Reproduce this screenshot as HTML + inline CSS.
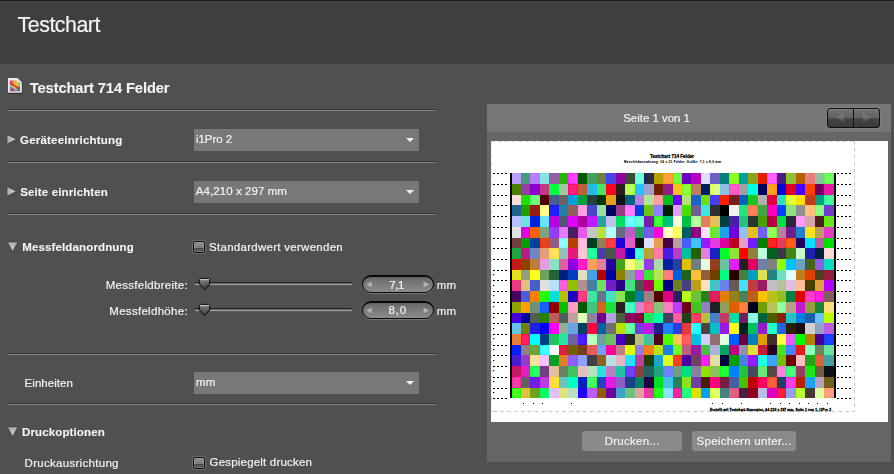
<!DOCTYPE html>
<html lang="de">
<head>
<meta charset="utf-8">
<title>Testchart</title>
<style>
*{box-sizing:border-box;margin:0;padding:0}
html,body{width:894px;height:474px;overflow:hidden;background:#505050}
body{position:relative;font-family:"Liberation Sans",sans-serif;color:#f2f2f2;font-size:13px}
.abs{position:absolute}
#topline{left:0;top:0;width:894px;height:2px;background:#1e1e1e;border-bottom:1px solid #464646}
#hdr{left:0;top:1px;width:894px;height:63px;background:#3f3f3f}
.sep{left:7px;width:429px;height:2px;background:linear-gradient(#363636 0 50%,transparent 50%)}
.sep:after{content:"";position:absolute;left:1px;right:0;top:1px;height:1px;background:#828282}
#tx{position:absolute;left:0;top:0;width:894px;height:474px;will-change:transform}
.t{-webkit-text-stroke:0.2px #f2f2f2}
.b{-webkit-text-stroke:0.1px #f4f4f4}
.t{color:#f2f2f2;line-height:1;white-space:nowrap}
.b{color:#f4f4f4;line-height:1;white-space:nowrap;font-weight:bold}
.sel{left:194px;width:225px;height:22px;background:#787878;color:#f4f4f4;font-size:12.5px;line-height:20px;padding-left:2px;white-space:nowrap}
.sel:after{content:"";position:absolute;right:5.2px;top:9px;border-left:4.4px solid transparent;border-right:4.4px solid transparent;border-top:4.6px solid #f0f0f0}
.tri-r{width:0;height:0;border-top:5px solid transparent;border-bottom:5px solid transparent;border-left:8px solid #b4b4b4}
.tri-d{width:0;height:0;border-left:5px solid transparent;border-right:5px solid transparent;border-top:9px solid #b4b4b4}
.cb{width:12px;height:12px;border:1px solid #0e0e0e;border-radius:2.5px;background:linear-gradient(#8e8e8e 0,#7c7c7c 58%,#4a4a4a 61%,#5e5e5e 100%);box-shadow:0 0 0 1px rgba(150,150,150,.4),inset 0 0 0 1px rgba(190,190,190,.3)}
.track{left:195px;width:156.5px;height:4px;border-radius:1.5px;background:linear-gradient(#1e1e1e 0 25%,#6a6a6a 25% 50%,#989898 50% 75%,#5a5a5a 75% 100%)}
.num{left:362px;width:71.5px;height:18px;border-radius:9px;border:1.5px solid #0a0a0a;border-top-width:2px;border-bottom-width:1.2px;background:linear-gradient(#636363 0,#707070 20%,#8c8c8c 100%);box-shadow:0 1px 0 rgba(150,150,150,.55)}
.num i{position:absolute;top:4.6px;width:0;height:0;border-top:2.8px solid transparent;border-bottom:2.8px solid transparent}
.num i.l{left:3.5px;border-right:5.2px solid #b0b0b0}
.num i.r{right:3px;border-left:5.2px solid #b0b0b0}
#panel{left:487px;top:104px;width:404px;height:357.5px;background:#666}
#phead{left:0;top:0;width:404px;height:28px;background:#767676}
#ptitle{left:0;top:6px;width:340px;text-align:center;font-size:13px;line-height:16px;color:#f4f4f4}
#page{left:4px;top:37px;width:397px;height:281px;background:#fff;overflow:hidden}
.btn{top:327px;height:20px;border-radius:3px;background:#8a8a8a;color:#f4f4f4;font-size:13px;line-height:19px;text-align:center;white-space:nowrap}
</style>
</head>
<body>
<div class="abs" id="hdr"></div>
<div class="abs" id="topline"></div>

<svg class="abs" style="left:7px;top:77px" width="17" height="18" viewBox="0 0 17 18">
<defs>
<linearGradient id="ic1" x1="0" y1="0" x2="1" y2="1"><stop offset="0" stop-color="#d8207c"/><stop offset="0.3" stop-color="#e8a838"/><stop offset="0.5" stop-color="#e8d840"/><stop offset="0.7" stop-color="#8cc844"/><stop offset="1" stop-color="#3a58c8"/></linearGradient>
<linearGradient id="ic2" x1="0" y1="0" x2="0.6" y2="1"><stop offset="0" stop-color="#e02888" stop-opacity="0"/><stop offset="0.35" stop-color="#60c8d8" stop-opacity=".95"/><stop offset="0.7" stop-color="#a040b8" stop-opacity=".95"/><stop offset="1" stop-color="#a030a0"/></linearGradient>
</defs>
<path d="M1.4 1.8h9.2l4.8 4.6v10.5h-14z" fill="#262626" opacity=".8"/>
<path d="M1 1h9.2l4.6 4.6v10.2h-13.8z" fill="#ececec"/>
<path d="M2.8 3.6h7.6v2.2h2.6v8.4h-10.2z" fill="url(#ic1)"/>
<path d="M2.8 6.5l5.6 7.7h-5.6z" fill="url(#ic2)"/>
<path d="M2.9 5.8l1 .2.8 1.4 1-.3.9 1.5 1-.3.8 1.5 1-.3.8 1.5 1-.2.6 1" fill="none" stroke="#e01848" stroke-width="1.3" stroke-linejoin="round"/>
<path d="M12.2 8.5l.8 1.2v4.5h-1.5z" fill="#3060d0" opacity=".8"/>
<path d="M10 1.2v5h5z" fill="#555" opacity=".55"/>
<path d="M10.2 1v4.4h4.6z" fill="#fafafa"/>
<path d="M11.2 2.6v2h2z" fill="#d4d4d4"/>
</svg>

<div class="abs sep" style="top:109px"></div>
<svg class="abs" width="0" height="0" style="left:0;top:0"><defs><linearGradient id="trg" x1="0" y1="0" x2="1" y2="0"><stop offset="0" stop-color="#a8a8a8"/><stop offset="1" stop-color="#d8d8d8"/></linearGradient><linearGradient id="tdg" x1="0" y1="0" x2="0" y2="1"><stop offset="0" stop-color="#a8a8a8"/><stop offset="1" stop-color="#dcdcdc"/></linearGradient></defs></svg>
<svg class="abs" style="left:5px;top:133px" width="14" height="14" viewBox="0 0 14 14"><path d="M2 1.5v9.6l9.2-4.8z" fill="url(#trg)" stroke="#3a3a3a" stroke-opacity=".6" stroke-width="1"/></svg>
<div class="abs sel" style="top:129px"></div>

<div class="abs sep" style="top:161px"></div>
<svg class="abs" style="left:5px;top:185px" width="14" height="14" viewBox="0 0 14 14"><path d="M2 1.5v9.6l9.2-4.8z" fill="url(#trg)" stroke="#3a3a3a" stroke-opacity=".6" stroke-width="1"/></svg>
<div class="abs sel" style="top:181px"></div>

<div class="abs sep" style="top:213px"></div>
<svg class="abs" style="left:5px;top:240px" width="16" height="14" viewBox="0 0 16 14"><path d="M2.4 2h10.4l-5.2 9.2z" fill="url(#tdg)" stroke="#3a3a3a" stroke-opacity=".6" stroke-width="1"/></svg>
<div class="abs cb" style="left:193px;top:241px"></div>

<div class="abs track" style="top:282px"></div>
<svg class="abs" style="left:198px;top:277px" width="14" height="15" viewBox="0 0 14 15"><defs><linearGradient id="tg" x1="0" y1="0" x2="0" y2="1"><stop offset="0" stop-color="#d8d8d8"/><stop offset="0.12" stop-color="#c0c0c0"/><stop offset="0.22" stop-color="#727272"/><stop offset="0.6" stop-color="#585858"/><stop offset="1" stop-color="#444"/></linearGradient></defs><path d="M2.4 2.2l-.8.9v4.5l5.2 5.2 5.2-5.2v-4.5l-.8-.9z" fill="#000" opacity=".25" transform="translate(0 1)"/><path d="M2.4 1.4h8.2l1 1v4.6l-5.1 5.1-5.1-5.1v-4.6z" fill="url(#tg)" stroke="#0c0c0c" stroke-width="1" stroke-linejoin="round"/></svg>
<div class="abs num" style="top:275px"><svg class="abs" style="left:0;top:0" width="68" height="15" viewBox="0 0 68 15"><path d="M3.3 7.4l5.4-2.9v5.8zM66.1 7.4l-5.5-2.9v5.8z" fill="#b4b4b4"/></svg></div>

<div class="abs track" style="top:308px"></div>
<svg class="abs" style="left:198px;top:303px" width="14" height="15" viewBox="0 0 14 15"><path d="M2.4 2.2l-.8.9v4.5l5.2 5.2 5.2-5.2v-4.5l-.8-.9z" fill="#000" opacity=".25" transform="translate(0 1)"/><path d="M2.4 1.4h8.2l1 1v4.6l-5.1 5.1-5.1-5.1v-4.6z" fill="url(#tg)" stroke="#0c0c0c" stroke-width="1" stroke-linejoin="round"/></svg>
<div class="abs num" style="top:301px"><svg class="abs" style="left:0;top:0" width="68" height="15" viewBox="0 0 68 15"><path d="M3.3 7.4l5.4-2.9v5.8zM66.1 7.4l-5.5-2.9v5.8z" fill="#b4b4b4"/></svg></div>

<div class="abs sep" style="top:353px"></div>
<div class="abs sel" style="top:372px"></div>
<div class="abs sep" style="top:403px"></div>

<svg class="abs" style="left:5px;top:425px" width="16" height="14" viewBox="0 0 16 14"><path d="M2.4 2h10.4l-5.2 9.2z" fill="url(#tdg)" stroke="#3a3a3a" stroke-opacity=".6" stroke-width="1"/></svg>
<div class="abs cb" style="left:193px;top:457px"></div>

<div class="abs" id="panel">
 <div class="abs" id="phead"></div>
 <div class="abs" id="nav" style="left:340px;top:4px;width:53px;height:20px;border-radius:3px;border:1px solid #101010;background:linear-gradient(#8a8a8a 0,#727272 6%,#606060 50%,#444 54%,#3a3a3a 100%);box-shadow:0 0 0 1px rgba(150,150,150,.35)">
  <div class="abs" style="left:24.5px;top:0;width:1px;height:18px;background:#101010"></div>
  <svg class="abs" style="left:0;top:0" width="51" height="18" viewBox="0 0 51 18"><defs><linearGradient id="ng" x1="0" y1="0" x2="0" y2="1"><stop offset="0" stop-color="#7e7e7e"/><stop offset="0.5" stop-color="#747474"/><stop offset="0.55" stop-color="#606060"/><stop offset="1" stop-color="#585858"/></linearGradient></defs><path d="M8 8.6l8-4.6v9.2z" fill="url(#ng)"/><path d="M43.3 8.6l-8.3-4.6v9.2z" fill="url(#ng)"/></svg>
 </div>
 <div class="abs" id="page">
 <svg class="abs" style="left:0;top:0" width="397" height="281" viewBox="0 0 397 281">
<g stroke="#c8c8c8" stroke-width="1" stroke-dasharray="3.7 3.2" fill="none"><path d="M0 0.5H363.5" stroke="#d4d4d4"/><path d="M363.5 0V270.5"/><path d="M0 270.5H363.5" stroke-dashoffset="-2.3"/><path d="M1 270.5H6.7" stroke-dasharray="none"/><path d="M0.5 0V270" stroke="#e4e4e4"/></g>
<g>
<rect x="21" y="32" width="9" height="11" fill="#bc98ff"/>
<rect x="21.8" y="32.8" width="7.4" height="9.4" fill="#b8a0f8"/>
<rect x="30" y="32" width="9" height="11" fill="#2fa780"/>
<rect x="30.8" y="32.8" width="7.4" height="9.4" fill="#4a9a80"/>
<rect x="39" y="32" width="10" height="11" fill="#c571ff"/>
<rect x="39.8" y="32.8" width="8.4" height="9.4" fill="#b880f8"/>
<rect x="49" y="32" width="9" height="11" fill="#74ecec"/>
<rect x="49.8" y="32.8" width="7.4" height="9.4" fill="#90e0e0"/>
<rect x="58" y="32" width="10" height="11" fill="#9d55b5"/>
<rect x="58.8" y="32.8" width="8.4" height="9.4" fill="#9060a0"/>
<rect x="68" y="32" width="9" height="11" fill="#20b800"/>
<rect x="77" y="32" width="10" height="11" fill="#ff19ff"/>
<rect x="77.8" y="32.8" width="8.4" height="9.4" fill="#ff40ff"/>
<rect x="87" y="32" width="9" height="11" fill="#005800"/>
<rect x="96" y="32" width="10" height="11" fill="#31a952"/>
<rect x="96.8" y="32.8" width="8.4" height="9.4" fill="#4a9a60"/>
<rect x="106" y="32" width="9" height="11" fill="#6e8626"/>
<rect x="106.8" y="32.8" width="7.4" height="9.4" fill="#708040"/>
<rect x="115" y="32" width="10" height="11" fill="#4040ff"/>
<rect x="115.8" y="32.8" width="8.4" height="9.4" fill="#4848e0"/>
<rect x="125" y="32" width="9" height="11" fill="#9000a0"/>
<rect x="134" y="32" width="10" height="11" fill="#394b33"/>
<rect x="134.8" y="32.8" width="8.4" height="9.4" fill="#3c4838"/>
<rect x="144" y="32" width="9" height="11" fill="#40ffe8"/>
<rect x="144.8" y="32.8" width="7.4" height="9.4" fill="#70ffe0"/>
<rect x="153" y="32" width="10" height="11" fill="#262656"/>
<rect x="153.8" y="32.8" width="8.4" height="9.4" fill="#282848"/>
<rect x="163" y="32" width="9" height="11" fill="#b8a000"/>
<rect x="172" y="32" width="10" height="11" fill="#ff9707"/>
<rect x="172.8" y="32.8" width="8.4" height="9.4" fill="#ffa040"/>
<rect x="182" y="32" width="9" height="11" fill="#48ff00"/>
<rect x="182.8" y="32.8" width="7.4" height="9.4" fill="#70ff40"/>
<rect x="191" y="32" width="9" height="11" fill="#7000c0"/>
<rect x="200" y="32" width="10" height="11" fill="#b800c0"/>
<rect x="210" y="32" width="9" height="11" fill="#dedeff"/>
<rect x="210.8" y="32.8" width="7.4" height="9.4" fill="#e0e0ff"/>
<rect x="219" y="32" width="10" height="11" fill="#7058e8"/>
<rect x="219.8" y="32.8" width="8.4" height="9.4" fill="#7060c0"/>
<rect x="229" y="32" width="9" height="11" fill="#008078"/>
<rect x="238" y="32" width="10" height="11" fill="#75ff00"/>
<rect x="238.8" y="32.8" width="8.4" height="9.4" fill="#90ff20"/>
<rect x="248" y="32" width="9" height="11" fill="#00a0a0"/>
<rect x="257" y="32" width="10" height="11" fill="#91a900"/>
<rect x="257.8" y="32.8" width="8.4" height="9.4" fill="#90a020"/>
<rect x="267" y="32" width="9" height="11" fill="#e02000"/>
<rect x="276" y="32" width="10" height="11" fill="#ff3fff"/>
<rect x="276.8" y="32.8" width="8.4" height="9.4" fill="#ff60ff"/>
<rect x="286" y="32" width="9" height="11" fill="#5115a5"/>
<rect x="286.8" y="32.8" width="7.4" height="9.4" fill="#482080"/>
<rect x="295" y="32" width="10" height="11" fill="#86ce0e"/>
<rect x="295.8" y="32.8" width="8.4" height="9.4" fill="#90c040"/>
<rect x="305" y="32" width="9" height="11" fill="#b86000"/>
<rect x="314" y="32" width="10" height="11" fill="#ff7272"/>
<rect x="314.8" y="32.8" width="8.4" height="9.4" fill="#e08080"/>
<rect x="324" y="32" width="9" height="11" fill="#81c999"/>
<rect x="324.8" y="32.8" width="7.4" height="9.4" fill="#90c0a0"/>
<rect x="333" y="32" width="10" height="11" fill="#47ff2f"/>
<rect x="333.8" y="32.8" width="8.4" height="9.4" fill="#70ff60"/>
<rect x="21" y="43" width="9" height="11" fill="#488000"/>
<rect x="30" y="43" width="9" height="11" fill="#a72fbf"/>
<rect x="30.8" y="43.8" width="7.4" height="9.4" fill="#9040a0"/>
<rect x="39" y="43" width="10" height="11" fill="#9000c8"/>
<rect x="49" y="43" width="9" height="11" fill="#de2a8a"/>
<rect x="49.8" y="43.8" width="7.4" height="9.4" fill="#b84080"/>
<rect x="58" y="43" width="10" height="11" fill="#00ff40"/>
<rect x="68" y="43" width="9" height="11" fill="#94d094"/>
<rect x="68.8" y="43.8" width="7.4" height="9.4" fill="#a0c8a0"/>
<rect x="77" y="43" width="10" height="11" fill="#ff007e"/>
<rect x="77.8" y="43.8" width="8.4" height="9.4" fill="#ff2078"/>
<rect x="87" y="43" width="9" height="11" fill="#d95525"/>
<rect x="87.8" y="43.8" width="7.4" height="9.4" fill="#b86040"/>
<rect x="96" y="43" width="10" height="11" fill="#00cbff"/>
<rect x="96.8" y="43.8" width="8.4" height="9.4" fill="#28b8e0"/>
<rect x="106" y="43" width="9" height="11" fill="#24fc48"/>
<rect x="106.8" y="43.8" width="7.4" height="9.4" fill="#50e068"/>
<rect x="115" y="43" width="10" height="11" fill="#ff0020"/>
<rect x="125" y="43" width="9" height="11" fill="#2b1f1f"/>
<rect x="125.8" y="43.8" width="7.4" height="9.4" fill="#282020"/>
<rect x="134" y="43" width="10" height="11" fill="#a8ff24"/>
<rect x="134.8" y="43.8" width="8.4" height="9.4" fill="#b8ff60"/>
<rect x="144" y="43" width="9" height="11" fill="#00d3ff"/>
<rect x="144.8" y="43.8" width="7.4" height="9.4" fill="#28c0ff"/>
<rect x="153" y="43" width="10" height="11" fill="#9e9eda"/>
<rect x="153.8" y="43.8" width="8.4" height="9.4" fill="#a0a0c8"/>
<rect x="163" y="43" width="9" height="11" fill="#702000"/>
<rect x="172" y="43" width="10" height="11" fill="#b20a9a"/>
<rect x="172.8" y="43.8" width="8.4" height="9.4" fill="#902080"/>
<rect x="182" y="43" width="9" height="11" fill="#ffbf00"/>
<rect x="182.8" y="43.8" width="7.4" height="9.4" fill="#ffc020"/>
<rect x="191" y="43" width="9" height="11" fill="#74ff00"/>
<rect x="191.8" y="43.8" width="7.4" height="9.4" fill="#90ff40"/>
<rect x="200" y="43" width="10" height="11" fill="#cd7949"/>
<rect x="200.8" y="43.8" width="8.4" height="9.4" fill="#b88060"/>
<rect x="210" y="43" width="9" height="11" fill="#002060"/>
<rect x="219" y="43" width="10" height="11" fill="#dcff4c"/>
<rect x="219.8" y="43.8" width="8.4" height="9.4" fill="#e0ff80"/>
<rect x="229" y="43" width="9" height="11" fill="#7dc5f5"/>
<rect x="229.8" y="43.8" width="7.4" height="9.4" fill="#90c0e0"/>
<rect x="238" y="43" width="10" height="11" fill="#ff43d3"/>
<rect x="238.8" y="43.8" width="8.4" height="9.4" fill="#ff60c0"/>
<rect x="248" y="43" width="9" height="11" fill="#a0a0a0"/>
<rect x="257" y="43" width="10" height="11" fill="#00ffe0"/>
<rect x="267" y="43" width="9" height="11" fill="#000060"/>
<rect x="276" y="43" width="10" height="11" fill="#ff9900"/>
<rect x="276.8" y="43.8" width="8.4" height="9.4" fill="#ffa020"/>
<rect x="286" y="43" width="9" height="11" fill="#0000e0"/>
<rect x="295" y="43" width="10" height="11" fill="#e00020"/>
<rect x="305" y="43" width="9" height="11" fill="#4800ff"/>
<rect x="314" y="43" width="10" height="11" fill="#ff4000"/>
<rect x="324" y="43" width="9" height="11" fill="#700060"/>
<rect x="333" y="43" width="10" height="11" fill="#ff00bc"/>
<rect x="333.8" y="43.8" width="8.4" height="9.4" fill="#e020a0"/>
<rect x="21" y="54" width="9" height="10" fill="#ffdbdb"/>
<rect x="21.8" y="54.8" width="7.4" height="8.4" fill="#ffe0e0"/>
<rect x="30" y="54" width="9" height="10" fill="#20e000"/>
<rect x="39" y="54" width="10" height="10" fill="#45ff5d"/>
<rect x="39.8" y="54.8" width="8.4" height="8.4" fill="#70ff80"/>
<rect x="49" y="54" width="9" height="10" fill="#500000"/>
<rect x="58" y="54" width="10" height="10" fill="#3d619d"/>
<rect x="58.8" y="54.8" width="8.4" height="8.4" fill="#486088"/>
<rect x="68" y="54" width="9" height="10" fill="#765e5e"/>
<rect x="68.8" y="54.8" width="7.4" height="8.4" fill="#706060"/>
<rect x="77" y="54" width="10" height="10" fill="#00a0e0"/>
<rect x="87" y="54" width="9" height="10" fill="#00a040"/>
<rect x="96" y="54" width="10" height="10" fill="#204444"/>
<rect x="96.8" y="54.8" width="8.4" height="8.4" fill="#284040"/>
<rect x="106" y="54" width="9" height="10" fill="#003800"/>
<rect x="115" y="54" width="10" height="10" fill="#fd9d00"/>
<rect x="115.8" y="54.8" width="8.4" height="8.4" fill="#e0a020"/>
<rect x="125" y="54" width="9" height="10" fill="#101410"/>
<rect x="134" y="54" width="10" height="10" fill="#006080"/>
<rect x="144" y="54" width="9" height="10" fill="#c672ff"/>
<rect x="144.8" y="54.8" width="7.4" height="8.4" fill="#b880e0"/>
<rect x="153" y="54" width="10" height="10" fill="#aeea8a"/>
<rect x="153.8" y="54.8" width="8.4" height="8.4" fill="#b8e0a0"/>
<rect x="163" y="54" width="9" height="10" fill="#ff9292"/>
<rect x="163.8" y="54.8" width="7.4" height="8.4" fill="#ffa0a0"/>
<rect x="172" y="54" width="10" height="10" fill="#00c020"/>
<rect x="182" y="54" width="9" height="10" fill="#7000ff"/>
<rect x="191" y="54" width="9" height="10" fill="#afeb5b"/>
<rect x="191.8" y="54.8" width="7.4" height="8.4" fill="#b8e080"/>
<rect x="200" y="54" width="10" height="10" fill="#0464f4"/>
<rect x="200.8" y="54.8" width="8.4" height="8.4" fill="#2060c0"/>
<rect x="210" y="54" width="9" height="10" fill="#70e000"/>
<rect x="219" y="54" width="10" height="10" fill="#4034ff"/>
<rect x="219.8" y="54.8" width="8.4" height="8.4" fill="#4840ff"/>
<rect x="229" y="54" width="9" height="10" fill="#ff2000"/>
<rect x="238" y="54" width="10" height="10" fill="#8c1414"/>
<rect x="238.8" y="54.8" width="8.4" height="8.4" fill="#702020"/>
<rect x="248" y="54" width="9" height="10" fill="#0060c0"/>
<rect x="257" y="54" width="10" height="10" fill="#00e100"/>
<rect x="257.8" y="54.8" width="8.4" height="8.4" fill="#20c020"/>
<rect x="267" y="54" width="9" height="10" fill="#b0b0b0"/>
<rect x="276" y="54" width="10" height="10" fill="#e00040"/>
<rect x="286" y="54" width="9" height="10" fill="#00fdcd"/>
<rect x="286.8" y="54.8" width="7.4" height="8.4" fill="#28e0c0"/>
<rect x="295" y="54" width="10" height="10" fill="#e0ff00"/>
<rect x="295.8" y="54.8" width="8.4" height="8.4" fill="#e0ff40"/>
<rect x="305" y="54" width="9" height="10" fill="#ffe000"/>
<rect x="314" y="54" width="10" height="10" fill="#e43000"/>
<rect x="314.8" y="54.8" width="8.4" height="8.4" fill="#b84020"/>
<rect x="324" y="54" width="9" height="10" fill="#00a080"/>
<rect x="333" y="54" width="10" height="10" fill="#0dff91"/>
<rect x="333.8" y="54.8" width="8.4" height="8.4" fill="#48ffa0"/>
<rect x="21" y="64" width="9" height="11" fill="#1266a2"/>
<rect x="21.8" y="64.8" width="7.4" height="9.4" fill="#286088"/>
<rect x="30" y="64" width="9" height="11" fill="#20a000"/>
<rect x="39" y="64" width="10" height="11" fill="#b70f0f"/>
<rect x="39.8" y="64.8" width="8.4" height="9.4" fill="#902020"/>
<rect x="49" y="64" width="9" height="11" fill="#ffff5f"/>
<rect x="49.8" y="64.8" width="7.4" height="9.4" fill="#ffff90"/>
<rect x="58" y="64" width="10" height="11" fill="#1414ff"/>
<rect x="58.8" y="64.8" width="8.4" height="9.4" fill="#2020ff"/>
<rect x="68" y="64" width="9" height="11" fill="#078bbb"/>
<rect x="68.8" y="64.8" width="7.4" height="9.4" fill="#2880a0"/>
<rect x="77" y="64" width="10" height="11" fill="#a15959"/>
<rect x="77.8" y="64.8" width="8.4" height="9.4" fill="#906060"/>
<rect x="87" y="64" width="9" height="11" fill="#ff8eee"/>
<rect x="87.8" y="64.8" width="7.4" height="9.4" fill="#ffa0e0"/>
<rect x="96" y="64" width="10" height="11" fill="#4141f5"/>
<rect x="96.8" y="64.8" width="8.4" height="9.4" fill="#4848c0"/>
<rect x="106" y="64" width="9" height="11" fill="#82ee8e"/>
<rect x="106.8" y="64.8" width="7.4" height="9.4" fill="#98e0a0"/>
<rect x="115" y="64" width="10" height="11" fill="#000060"/>
<rect x="125" y="64" width="9" height="11" fill="#a83090"/>
<rect x="125.8" y="64.8" width="7.4" height="9.4" fill="#904080"/>
<rect x="134" y="64" width="10" height="11" fill="#ff66ff"/>
<rect x="134.8" y="64.8" width="8.4" height="9.4" fill="#ff80ff"/>
<rect x="144" y="64" width="9" height="11" fill="#0040e0"/>
<rect x="153" y="64" width="10" height="11" fill="#5dd500"/>
<rect x="153.8" y="64.8" width="8.4" height="9.4" fill="#70c020"/>
<rect x="163" y="64" width="9" height="11" fill="#8f77ff"/>
<rect x="163.8" y="64.8" width="7.4" height="9.4" fill="#9080ff"/>
<rect x="172" y="64" width="10" height="11" fill="#002000"/>
<rect x="182" y="64" width="9" height="11" fill="#f191ff"/>
<rect x="182.8" y="64.8" width="7.4" height="9.4" fill="#e0a0ff"/>
<rect x="191" y="64" width="9" height="11" fill="#48e000"/>
<rect x="200" y="64" width="10" height="11" fill="#735ba3"/>
<rect x="200.8" y="64.8" width="8.4" height="9.4" fill="#706090"/>
<rect x="210" y="64" width="9" height="11" fill="#13f7f7"/>
<rect x="210.8" y="64.8" width="7.4" height="9.4" fill="#48e0e0"/>
<rect x="219" y="64" width="10" height="11" fill="#303030"/>
<rect x="229" y="64" width="9" height="11" fill="#000000"/>
<rect x="238" y="64" width="10" height="11" fill="#f0f0f0"/>
<rect x="248" y="64" width="9" height="11" fill="#00ff71"/>
<rect x="248.8" y="64.8" width="7.4" height="9.4" fill="#28e080"/>
<rect x="257" y="64" width="10" height="11" fill="#ff6f3f"/>
<rect x="257.8" y="64.8" width="8.4" height="9.4" fill="#ff8060"/>
<rect x="267" y="64" width="9" height="11" fill="#2eb22e"/>
<rect x="267.8" y="64.8" width="7.4" height="9.4" fill="#48a048"/>
<rect x="276" y="64" width="10" height="11" fill="#ff00c0"/>
<rect x="286" y="64" width="9" height="11" fill="#0040ff"/>
<rect x="295" y="64" width="10" height="11" fill="#79f161"/>
<rect x="295.8" y="64.8" width="8.4" height="9.4" fill="#90e080"/>
<rect x="305" y="64" width="9" height="11" fill="#909090"/>
<rect x="314" y="64" width="10" height="11" fill="#ffba5a"/>
<rect x="314.8" y="64.8" width="8.4" height="9.4" fill="#ffc080"/>
<rect x="324" y="64" width="9" height="11" fill="#70ff58"/>
<rect x="324.8" y="64.8" width="7.4" height="9.4" fill="#90ff80"/>
<rect x="333" y="64" width="10" height="11" fill="#7a32f2"/>
<rect x="333.8" y="64.8" width="8.4" height="9.4" fill="#7040c0"/>
<rect x="21" y="75" width="9" height="11" fill="#b2beff"/>
<rect x="21.8" y="75.8" width="7.4" height="9.4" fill="#b8c0ff"/>
<rect x="30" y="75" width="9" height="11" fill="#49f1f1"/>
<rect x="30.8" y="75.8" width="7.4" height="9.4" fill="#70e0e0"/>
<rect x="39" y="75" width="10" height="11" fill="#0020e0"/>
<rect x="49" y="75" width="9" height="11" fill="#47efff"/>
<rect x="49.8" y="75.8" width="7.4" height="9.4" fill="#70e0ff"/>
<rect x="58" y="75" width="10" height="11" fill="#b800e0"/>
<rect x="68" y="75" width="9" height="11" fill="#4c587c"/>
<rect x="68.8" y="75.8" width="7.4" height="9.4" fill="#505870"/>
<rect x="77" y="75" width="10" height="11" fill="#e000ff"/>
<rect x="87" y="75" width="9" height="11" fill="#b000a0"/>
<rect x="96" y="75" width="10" height="11" fill="#e100ff"/>
<rect x="96.8" y="75.8" width="8.4" height="9.4" fill="#b820ff"/>
<rect x="106" y="75" width="9" height="11" fill="#00b2b2"/>
<rect x="106.8" y="75.8" width="7.4" height="9.4" fill="#28a0a0"/>
<rect x="115" y="75" width="10" height="11" fill="#bebefa"/>
<rect x="115.8" y="75.8" width="8.4" height="9.4" fill="#c0c0e8"/>
<rect x="125" y="75" width="9" height="11" fill="#00e060"/>
<rect x="134" y="75" width="10" height="11" fill="#3effff"/>
<rect x="134.8" y="75.8" width="8.4" height="9.4" fill="#70ffff"/>
<rect x="144" y="75" width="9" height="11" fill="#41ffd1"/>
<rect x="144.8" y="75.8" width="7.4" height="9.4" fill="#70ffd0"/>
<rect x="153" y="75" width="10" height="11" fill="#850dcd"/>
<rect x="153.8" y="75.8" width="8.4" height="9.4" fill="#7020a0"/>
<rect x="163" y="75" width="9" height="11" fill="#12ff06"/>
<rect x="163.8" y="75.8" width="7.4" height="9.4" fill="#48ff40"/>
<rect x="172" y="75" width="10" height="11" fill="#00c080"/>
<rect x="182" y="75" width="9" height="11" fill="#ffffd2"/>
<rect x="182.8" y="75.8" width="7.4" height="9.4" fill="#ffffe0"/>
<rect x="191" y="75" width="9" height="11" fill="#00c040"/>
<rect x="200" y="75" width="10" height="11" fill="#a4ff80"/>
<rect x="200.8" y="75.8" width="8.4" height="9.4" fill="#b8ffa0"/>
<rect x="210" y="75" width="9" height="11" fill="#ff7343"/>
<rect x="210.8" y="75.8" width="7.4" height="9.4" fill="#e08060"/>
<rect x="219" y="75" width="10" height="11" fill="#f0c030"/>
<rect x="219.8" y="75.8" width="8.4" height="9.4" fill="#e0c060"/>
<rect x="229" y="75" width="9" height="11" fill="#004040"/>
<rect x="238" y="75" width="10" height="11" fill="#4f13d3"/>
<rect x="238.8" y="75.8" width="8.4" height="9.4" fill="#4820a0"/>
<rect x="248" y="75" width="9" height="11" fill="#00da7a"/>
<rect x="248.8" y="75.8" width="7.4" height="9.4" fill="#28c080"/>
<rect x="257" y="75" width="10" height="11" fill="#233b2f"/>
<rect x="257.8" y="75.8" width="8.4" height="9.4" fill="#283830"/>
<rect x="267" y="75" width="9" height="11" fill="#48a000"/>
<rect x="276" y="75" width="10" height="11" fill="#b80040"/>
<rect x="286" y="75" width="9" height="11" fill="#00e040"/>
<rect x="295" y="75" width="10" height="11" fill="#27273f"/>
<rect x="295.8" y="75.8" width="8.4" height="9.4" fill="#282838"/>
<rect x="305" y="75" width="9" height="11" fill="#ff8dff"/>
<rect x="305.8" y="75.8" width="7.4" height="9.4" fill="#ffa0ff"/>
<rect x="314" y="75" width="10" height="11" fill="#dea2a2"/>
<rect x="314.8" y="75.8" width="8.4" height="9.4" fill="#d0a8a8"/>
<rect x="324" y="75" width="9" height="11" fill="#611919"/>
<rect x="324.8" y="75.8" width="7.4" height="9.4" fill="#502020"/>
<rect x="333" y="75" width="10" height="11" fill="#53fb00"/>
<rect x="333.8" y="75.8" width="8.4" height="9.4" fill="#70e020"/>
<rect x="21" y="86" width="9" height="11" fill="#dfe5df"/>
<rect x="21.8" y="86.8" width="7.4" height="9.4" fill="#e0e4e0"/>
<rect x="30" y="86" width="9" height="11" fill="#e000e0"/>
<rect x="39" y="86" width="10" height="11" fill="#ff6000"/>
<rect x="49" y="86" width="9" height="11" fill="#77a777"/>
<rect x="49.8" y="86.8" width="7.4" height="9.4" fill="#80a080"/>
<rect x="58" y="86" width="10" height="11" fill="#a129ff"/>
<rect x="58.8" y="86.8" width="8.4" height="9.4" fill="#9040ff"/>
<rect x="68" y="86" width="9" height="11" fill="#fb6bff"/>
<rect x="68.8" y="86.8" width="7.4" height="9.4" fill="#e080ff"/>
<rect x="77" y="86" width="10" height="11" fill="#521676"/>
<rect x="77.8" y="86.8" width="8.4" height="9.4" fill="#482060"/>
<rect x="87" y="86" width="9" height="11" fill="#ff46ff"/>
<rect x="87.8" y="86.8" width="7.4" height="9.4" fill="#e060e0"/>
<rect x="96" y="86" width="10" height="11" fill="#becabe"/>
<rect x="96.8" y="86.8" width="8.4" height="9.4" fill="#c0c8c0"/>
<rect x="106" y="86" width="9" height="11" fill="#b3ef00"/>
<rect x="106.8" y="86.8" width="7.4" height="9.4" fill="#b8e040"/>
<rect x="115" y="86" width="10" height="11" fill="#9fffff"/>
<rect x="115.8" y="86.8" width="8.4" height="9.4" fill="#b8ffff"/>
<rect x="125" y="86" width="9" height="11" fill="#67678b"/>
<rect x="125.8" y="86.8" width="7.4" height="9.4" fill="#686880"/>
<rect x="134" y="86" width="10" height="11" fill="#d24ede"/>
<rect x="134.8" y="86.8" width="8.4" height="9.4" fill="#b860c0"/>
<rect x="144" y="86" width="9" height="11" fill="#02b656"/>
<rect x="144.8" y="86.8" width="7.4" height="9.4" fill="#28a060"/>
<rect x="153" y="86" width="10" height="11" fill="#6f57ff"/>
<rect x="153.8" y="86.8" width="8.4" height="9.4" fill="#7060e0"/>
<rect x="163" y="86" width="9" height="11" fill="#ff00e0"/>
<rect x="172" y="86" width="10" height="11" fill="#ffffa4"/>
<rect x="172.8" y="86.8" width="8.4" height="9.4" fill="#ffffc0"/>
<rect x="182" y="86" width="9" height="11" fill="#ffff19"/>
<rect x="182.8" y="86.8" width="7.4" height="9.4" fill="#ffff60"/>
<rect x="191" y="86" width="9" height="11" fill="#006060"/>
<rect x="200" y="86" width="10" height="11" fill="#900080"/>
<rect x="210" y="86" width="9" height="11" fill="#ffdaff"/>
<rect x="210.8" y="86.8" width="7.4" height="9.4" fill="#ffe0ff"/>
<rect x="219" y="86" width="10" height="11" fill="#52fa0a"/>
<rect x="219.8" y="86.8" width="8.4" height="9.4" fill="#70e040"/>
<rect x="229" y="86" width="9" height="11" fill="#00aeff"/>
<rect x="229.8" y="86.8" width="7.4" height="9.4" fill="#28a0e0"/>
<rect x="238" y="86" width="10" height="11" fill="#7000e0"/>
<rect x="248" y="86" width="9" height="11" fill="#7cc4ff"/>
<rect x="248.8" y="86.8" width="7.4" height="9.4" fill="#90c0ff"/>
<rect x="257" y="86" width="10" height="11" fill="#f4c400"/>
<rect x="257.8" y="86.8" width="8.4" height="9.4" fill="#e0c020"/>
<rect x="267" y="86" width="9" height="11" fill="#6d55ff"/>
<rect x="267.8" y="86.8" width="7.4" height="9.4" fill="#7060ff"/>
<rect x="276" y="86" width="10" height="11" fill="#72ff2a"/>
<rect x="276.8" y="86.8" width="8.4" height="9.4" fill="#90ff60"/>
<rect x="286" y="86" width="9" height="11" fill="#ca76a6"/>
<rect x="286.8" y="86.8" width="7.4" height="9.4" fill="#b880a0"/>
<rect x="295" y="86" width="10" height="11" fill="#870f9f"/>
<rect x="295.8" y="86.8" width="8.4" height="9.4" fill="#702080"/>
<rect x="305" y="86" width="9" height="11" fill="#068aea"/>
<rect x="305.8" y="86.8" width="7.4" height="9.4" fill="#2880c0"/>
<rect x="314" y="86" width="10" height="11" fill="#ffe600"/>
<rect x="314.8" y="86.8" width="8.4" height="9.4" fill="#ffe020"/>
<rect x="324" y="86" width="9" height="11" fill="#c4a040"/>
<rect x="324.8" y="86.8" width="7.4" height="9.4" fill="#b8a060"/>
<rect x="333" y="86" width="10" height="11" fill="#ff21e1"/>
<rect x="333.8" y="86.8" width="8.4" height="9.4" fill="#e040c0"/>
<rect x="21" y="97" width="9" height="10" fill="#813939"/>
<rect x="21.8" y="97.8" width="7.4" height="8.4" fill="#704040"/>
<rect x="30" y="97" width="9" height="10" fill="#00a000"/>
<rect x="39" y="97" width="10" height="10" fill="#0040a0"/>
<rect x="49" y="97" width="9" height="10" fill="#ff3300"/>
<rect x="49.8" y="97.8" width="7.4" height="8.4" fill="#e04820"/>
<rect x="58" y="97" width="10" height="10" fill="#9f5787"/>
<rect x="58.8" y="97.8" width="8.4" height="8.4" fill="#906080"/>
<rect x="68" y="97" width="9" height="10" fill="#69ffff"/>
<rect x="68.8" y="97.8" width="7.4" height="8.4" fill="#90ffff"/>
<rect x="77" y="97" width="10" height="10" fill="#b84000"/>
<rect x="87" y="97" width="9" height="10" fill="#ffb5e5"/>
<rect x="87.8" y="97.8" width="7.4" height="8.4" fill="#ffc0e0"/>
<rect x="96" y="97" width="10" height="10" fill="#004020"/>
<rect x="106" y="97" width="9" height="10" fill="#977f4f"/>
<rect x="106.8" y="97.8" width="7.4" height="8.4" fill="#908060"/>
<rect x="115" y="97" width="10" height="10" fill="#ff2323"/>
<rect x="115.8" y="97.8" width="8.4" height="8.4" fill="#ff4040"/>
<rect x="125" y="97" width="9" height="10" fill="#2000e0"/>
<rect x="134" y="97" width="10" height="10" fill="#ff48d8"/>
<rect x="134.8" y="97.8" width="8.4" height="8.4" fill="#e060c0"/>
<rect x="144" y="97" width="9" height="10" fill="#101010"/>
<rect x="153" y="97" width="10" height="10" fill="#dedeff"/>
<rect x="153.8" y="97.8" width="8.4" height="8.4" fill="#e0e0ff"/>
<rect x="163" y="97" width="9" height="10" fill="#fa9a3a"/>
<rect x="163.8" y="97.8" width="7.4" height="8.4" fill="#e0a060"/>
<rect x="172" y="97" width="10" height="10" fill="#480048"/>
<rect x="182" y="97" width="9" height="10" fill="#c09c9c"/>
<rect x="182.8" y="97.8" width="7.4" height="8.4" fill="#b8a0a0"/>
<rect x="191" y="97" width="9" height="10" fill="#375bff"/>
<rect x="191.8" y="97.8" width="7.4" height="8.4" fill="#4860ff"/>
<rect x="200" y="97" width="10" height="10" fill="#1bcfff"/>
<rect x="200.8" y="97.8" width="8.4" height="8.4" fill="#48c0ff"/>
<rect x="210" y="97" width="9" height="10" fill="#ab03ff"/>
<rect x="210.8" y="97.8" width="7.4" height="8.4" fill="#9020ff"/>
<rect x="219" y="97" width="10" height="10" fill="#ff1fff"/>
<rect x="219.8" y="97.8" width="8.4" height="8.4" fill="#e040e0"/>
<rect x="229" y="97" width="9" height="10" fill="#e000a0"/>
<rect x="238" y="97" width="10" height="10" fill="#b80020"/>
<rect x="248" y="97" width="9" height="10" fill="#f595c5"/>
<rect x="248.8" y="97.8" width="7.4" height="8.4" fill="#e0a0c0"/>
<rect x="257" y="97" width="10" height="10" fill="#8008ff"/>
<rect x="257.8" y="97.8" width="8.4" height="8.4" fill="#7020ff"/>
<rect x="267" y="97" width="9" height="10" fill="#008000"/>
<rect x="276" y="97" width="10" height="10" fill="#ff0000"/>
<rect x="276.8" y="97.8" width="8.4" height="8.4" fill="#ff2020"/>
<rect x="286" y="97" width="9" height="10" fill="#ff2656"/>
<rect x="286.8" y="97.8" width="7.4" height="8.4" fill="#e04060"/>
<rect x="295" y="97" width="10" height="10" fill="#ff4c00"/>
<rect x="295.8" y="97.8" width="8.4" height="8.4" fill="#ff6020"/>
<rect x="305" y="97" width="9" height="10" fill="#200060"/>
<rect x="314" y="97" width="10" height="10" fill="#00e0ff"/>
<rect x="324" y="97" width="9" height="10" fill="#d34faf"/>
<rect x="324.8" y="97.8" width="7.4" height="8.4" fill="#b860a0"/>
<rect x="333" y="97" width="10" height="10" fill="#00e000"/>
<rect x="21" y="107" width="9" height="11" fill="#03b733"/>
<rect x="21.8" y="107.8" width="7.4" height="9.4" fill="#28a048"/>
<rect x="30" y="107" width="9" height="11" fill="#e80494"/>
<rect x="30.8" y="107.8" width="7.4" height="9.4" fill="#b82080"/>
<rect x="39" y="107" width="10" height="11" fill="#6589dd"/>
<rect x="39.8" y="107.8" width="8.4" height="9.4" fill="#7088c0"/>
<rect x="49" y="107" width="9" height="11" fill="#f89868"/>
<rect x="49.8" y="107.8" width="7.4" height="9.4" fill="#e0a080"/>
<rect x="58" y="107" width="10" height="11" fill="#ffe222"/>
<rect x="58.8" y="107.8" width="8.4" height="9.4" fill="#ffe060"/>
<rect x="68" y="107" width="9" height="11" fill="#7fc7c7"/>
<rect x="68.8" y="107.8" width="7.4" height="9.4" fill="#90c0c0"/>
<rect x="77" y="107" width="10" height="11" fill="#ff0082"/>
<rect x="77.8" y="107.8" width="8.4" height="9.4" fill="#e02078"/>
<rect x="87" y="107" width="9" height="11" fill="#ffc0cc"/>
<rect x="87.8" y="107.8" width="7.4" height="9.4" fill="#f8c8d0"/>
<rect x="96" y="107" width="10" height="11" fill="#00ff96"/>
<rect x="96.8" y="107.8" width="8.4" height="9.4" fill="#28ffa0"/>
<rect x="106" y="107" width="9" height="11" fill="#463aca"/>
<rect x="106.8" y="107.8" width="7.4" height="9.4" fill="#4840a0"/>
<rect x="115" y="107" width="10" height="11" fill="#435b43"/>
<rect x="115.8" y="107.8" width="8.4" height="9.4" fill="#485848"/>
<rect x="125" y="107" width="9" height="11" fill="#e602c2"/>
<rect x="125.8" y="107.8" width="7.4" height="9.4" fill="#b820a0"/>
<rect x="134" y="107" width="10" height="11" fill="#0000c0"/>
<rect x="144" y="107" width="9" height="11" fill="#0affee"/>
<rect x="144.8" y="107.8" width="7.4" height="9.4" fill="#48ffe0"/>
<rect x="153" y="107" width="10" height="11" fill="#c6a212"/>
<rect x="153.8" y="107.8" width="8.4" height="9.4" fill="#b8a040"/>
<rect x="163" y="107" width="9" height="11" fill="#ff6b9b"/>
<rect x="163.8" y="107.8" width="7.4" height="9.4" fill="#ff80a0"/>
<rect x="172" y="107" width="10" height="11" fill="#4b0fff"/>
<rect x="172.8" y="107.8" width="8.4" height="9.4" fill="#4820e0"/>
<rect x="182" y="107" width="9" height="11" fill="#db27e7"/>
<rect x="182.8" y="107.8" width="7.4" height="9.4" fill="#b840c0"/>
<rect x="191" y="107" width="9" height="11" fill="#00c0a0"/>
<rect x="200" y="107" width="10" height="11" fill="#286000"/>
<rect x="210" y="107" width="9" height="11" fill="#fc6cfc"/>
<rect x="210.8" y="107.8" width="7.4" height="9.4" fill="#e080e0"/>
<rect x="219" y="107" width="10" height="11" fill="#1717ff"/>
<rect x="219.8" y="107.8" width="8.4" height="9.4" fill="#2020c0"/>
<rect x="229" y="107" width="9" height="11" fill="#00ff20"/>
<rect x="238" y="107" width="10" height="11" fill="#7df505"/>
<rect x="238.8" y="107.8" width="8.4" height="9.4" fill="#90e040"/>
<rect x="248" y="107" width="9" height="11" fill="#ff0000"/>
<rect x="257" y="107" width="10" height="11" fill="#998121"/>
<rect x="257.8" y="107.8" width="8.4" height="9.4" fill="#908040"/>
<rect x="267" y="107" width="9" height="11" fill="#acffdc"/>
<rect x="267.8" y="107.8" width="7.4" height="9.4" fill="#c0ffe0"/>
<rect x="276" y="107" width="10" height="11" fill="#006020"/>
<rect x="286" y="107" width="9" height="11" fill="#37374f"/>
<rect x="286.8" y="107.8" width="7.4" height="9.4" fill="#383848"/>
<rect x="295" y="107" width="10" height="11" fill="#3a8e00"/>
<rect x="295.8" y="107.8" width="8.4" height="9.4" fill="#488020"/>
<rect x="305" y="107" width="9" height="11" fill="#c4ffc4"/>
<rect x="305.8" y="107.8" width="7.4" height="9.4" fill="#d0f8d0"/>
<rect x="314" y="107" width="10" height="11" fill="#1919d9"/>
<rect x="314.8" y="107.8" width="8.4" height="9.4" fill="#2020a0"/>
<rect x="324" y="107" width="9" height="11" fill="#002040"/>
<rect x="333" y="107" width="10" height="11" fill="#ffd2d2"/>
<rect x="333.8" y="107.8" width="8.4" height="9.4" fill="#ffd8d8"/>
<rect x="21" y="118" width="9" height="11" fill="#ed0909"/>
<rect x="21.8" y="118.8" width="7.4" height="9.4" fill="#b82020"/>
<rect x="30" y="118" width="9" height="11" fill="#904000"/>
<rect x="39" y="118" width="10" height="11" fill="#cf7b1b"/>
<rect x="39.8" y="118.8" width="8.4" height="9.4" fill="#b88040"/>
<rect x="49" y="118" width="9" height="11" fill="#f393f3"/>
<rect x="49.8" y="118.8" width="7.4" height="9.4" fill="#e0a0e0"/>
<rect x="58" y="118" width="10" height="11" fill="#76eebe"/>
<rect x="58.8" y="118.8" width="8.4" height="9.4" fill="#90e0c0"/>
<rect x="68" y="118" width="9" height="11" fill="#ff49a9"/>
<rect x="68.8" y="118.8" width="7.4" height="9.4" fill="#e060a0"/>
<rect x="77" y="118" width="10" height="11" fill="#9000e0"/>
<rect x="87" y="118" width="9" height="11" fill="#ff00e6"/>
<rect x="87.8" y="118.8" width="7.4" height="9.4" fill="#ff20c0"/>
<rect x="96" y="118" width="10" height="11" fill="#ff9535"/>
<rect x="96.8" y="118.8" width="8.4" height="9.4" fill="#ffa060"/>
<rect x="106" y="118" width="9" height="11" fill="#ff70a0"/>
<rect x="106.8" y="118.8" width="7.4" height="9.4" fill="#e080a0"/>
<rect x="115" y="118" width="10" height="11" fill="#2800a0"/>
<rect x="125" y="118" width="9" height="11" fill="#30b400"/>
<rect x="125.8" y="118.8" width="7.4" height="9.4" fill="#48a020"/>
<rect x="134" y="118" width="10" height="11" fill="#ffff47"/>
<rect x="134.8" y="118.8" width="8.4" height="9.4" fill="#ffff80"/>
<rect x="144" y="118" width="9" height="11" fill="#a6ff52"/>
<rect x="144.8" y="118.8" width="7.4" height="9.4" fill="#b8ff80"/>
<rect x="153" y="118" width="10" height="11" fill="#a32bff"/>
<rect x="153.8" y="118.8" width="8.4" height="9.4" fill="#9040e0"/>
<rect x="163" y="118" width="9" height="11" fill="#a4e0a4"/>
<rect x="163.8" y="118.8" width="7.4" height="9.4" fill="#b0d8b0"/>
<rect x="172" y="118" width="10" height="11" fill="#0020a0"/>
<rect x="182" y="118" width="9" height="11" fill="#1a3ece"/>
<rect x="182.8" y="118.8" width="7.4" height="9.4" fill="#2840a0"/>
<rect x="191" y="118" width="9" height="11" fill="#e0c000"/>
<rect x="200" y="118" width="10" height="11" fill="#6a8282"/>
<rect x="200.8" y="118.8" width="8.4" height="9.4" fill="#708080"/>
<rect x="210" y="118" width="9" height="11" fill="#d7ffd7"/>
<rect x="210.8" y="118.8" width="7.4" height="9.4" fill="#e0ffe0"/>
<rect x="219" y="118" width="10" height="11" fill="#ae3606"/>
<rect x="219.8" y="118.8" width="8.4" height="9.4" fill="#904020"/>
<rect x="229" y="118" width="9" height="11" fill="#56ce9e"/>
<rect x="229.8" y="118.8" width="7.4" height="9.4" fill="#70c0a0"/>
<rect x="238" y="118" width="10" height="11" fill="#ff00ff"/>
<rect x="238.8" y="118.8" width="8.4" height="9.4" fill="#e020ff"/>
<rect x="248" y="118" width="9" height="11" fill="#202020"/>
<rect x="257" y="118" width="10" height="11" fill="#e00060"/>
<rect x="267" y="118" width="9" height="11" fill="#6981b1"/>
<rect x="267.8" y="118.8" width="7.4" height="9.4" fill="#7080a0"/>
<rect x="276" y="118" width="10" height="11" fill="#808080"/>
<rect x="286" y="118" width="9" height="11" fill="#90ff00"/>
<rect x="295" y="118" width="10" height="11" fill="#00c0ff"/>
<rect x="305" y="118" width="9" height="11" fill="#5da5d5"/>
<rect x="305.8" y="118.8" width="7.4" height="9.4" fill="#70a0c0"/>
<rect x="314" y="118" width="10" height="11" fill="#436707"/>
<rect x="314.8" y="118.8" width="8.4" height="9.4" fill="#486020"/>
<rect x="324" y="118" width="9" height="11" fill="#9a52ff"/>
<rect x="324.8" y="118.8" width="7.4" height="9.4" fill="#9060e0"/>
<rect x="333" y="118" width="10" height="11" fill="#00e0c0"/>
<rect x="21" y="129" width="9" height="10" fill="#ebeb00"/>
<rect x="21.8" y="129.8" width="7.4" height="8.4" fill="#e0e020"/>
<rect x="30" y="129" width="9" height="10" fill="#8ca474"/>
<rect x="30.8" y="129.8" width="7.4" height="8.4" fill="#90a080"/>
<rect x="39" y="129" width="10" height="10" fill="#ffff00"/>
<rect x="39.8" y="129.8" width="8.4" height="8.4" fill="#ffff20"/>
<rect x="49" y="129" width="9" height="10" fill="#63ab4b"/>
<rect x="49.8" y="129.8" width="7.4" height="8.4" fill="#70a060"/>
<rect x="58" y="129" width="10" height="10" fill="#166a3a"/>
<rect x="58.8" y="129.8" width="8.4" height="8.4" fill="#286040"/>
<rect x="68" y="129" width="9" height="10" fill="#002080"/>
<rect x="77" y="129" width="10" height="10" fill="#0040c0"/>
<rect x="87" y="129" width="9" height="10" fill="#e2e2b2"/>
<rect x="87.8" y="129.8" width="7.4" height="8.4" fill="#e0e0c0"/>
<rect x="96" y="129" width="10" height="10" fill="#26aaff"/>
<rect x="96.8" y="129.8" width="8.4" height="8.4" fill="#48a0e0"/>
<rect x="106" y="129" width="9" height="10" fill="#b80000"/>
<rect x="115" y="129" width="10" height="10" fill="#0000a0"/>
<rect x="125" y="129" width="9" height="10" fill="#908000"/>
<rect x="134" y="129" width="10" height="10" fill="#8aa2a2"/>
<rect x="134.8" y="129.8" width="8.4" height="8.4" fill="#90a0a0"/>
<rect x="144" y="129" width="9" height="10" fill="#ff1dff"/>
<rect x="144.8" y="129.8" width="7.4" height="8.4" fill="#e040ff"/>
<rect x="153" y="129" width="10" height="10" fill="#1cff10"/>
<rect x="153.8" y="129.8" width="8.4" height="8.4" fill="#48e040"/>
<rect x="163" y="129" width="9" height="10" fill="#b1ed2d"/>
<rect x="163.8" y="129.8" width="7.4" height="8.4" fill="#b8e060"/>
<rect x="172" y="129" width="10" height="10" fill="#ff6d6d"/>
<rect x="172.8" y="129.8" width="8.4" height="8.4" fill="#ff8080"/>
<rect x="182" y="129" width="9" height="10" fill="#0060e0"/>
<rect x="191" y="129" width="9" height="10" fill="#186c0c"/>
<rect x="191.8" y="129.8" width="7.4" height="8.4" fill="#286020"/>
<rect x="200" y="129" width="10" height="10" fill="#ffbe00"/>
<rect x="200.8" y="129.8" width="8.4" height="8.4" fill="#ffc040"/>
<rect x="210" y="129" width="9" height="10" fill="#a35b2b"/>
<rect x="210.8" y="129.8" width="7.4" height="8.4" fill="#906040"/>
<rect x="219" y="129" width="10" height="10" fill="#704000"/>
<rect x="229" y="129" width="9" height="10" fill="#00ff80"/>
<rect x="238" y="129" width="10" height="10" fill="#280000"/>
<rect x="248" y="129" width="9" height="10" fill="#388c2c"/>
<rect x="248.8" y="129.8" width="7.4" height="8.4" fill="#488040"/>
<rect x="257" y="129" width="10" height="10" fill="#00a0c0"/>
<rect x="267" y="129" width="9" height="10" fill="#e7e727"/>
<rect x="267.8" y="129.8" width="7.4" height="8.4" fill="#e0e060"/>
<rect x="276" y="129" width="10" height="10" fill="#098d8d"/>
<rect x="276.8" y="129.8" width="8.4" height="8.4" fill="#288080"/>
<rect x="286" y="129" width="9" height="10" fill="#4bf3c3"/>
<rect x="286.8" y="129.8" width="7.4" height="8.4" fill="#70e0c0"/>
<rect x="295" y="129" width="10" height="10" fill="#d5ffff"/>
<rect x="295.8" y="129.8" width="8.4" height="8.4" fill="#e0ffff"/>
<rect x="305" y="129" width="9" height="10" fill="#d17d00"/>
<rect x="305.8" y="129.8" width="7.4" height="8.4" fill="#b88020"/>
<rect x="314" y="129" width="10" height="10" fill="#e04000"/>
<rect x="324" y="129" width="9" height="10" fill="#4d4111"/>
<rect x="324.8" y="129.8" width="7.4" height="8.4" fill="#484020"/>
<rect x="333" y="129" width="10" height="10" fill="#b50d3d"/>
<rect x="333.8" y="129.8" width="8.4" height="8.4" fill="#902040"/>
<rect x="21" y="139" width="9" height="11" fill="#ff2484"/>
<rect x="21.8" y="139.8" width="7.4" height="9.4" fill="#e04080"/>
<rect x="30" y="139" width="9" height="11" fill="#efbf5f"/>
<rect x="30.8" y="139.8" width="7.4" height="9.4" fill="#e0c080"/>
<rect x="39" y="139" width="10" height="11" fill="#3a5eee"/>
<rect x="39.8" y="139.8" width="8.4" height="9.4" fill="#4860c0"/>
<rect x="49" y="139" width="9" height="11" fill="#e0e0e0"/>
<rect x="58" y="139" width="10" height="11" fill="#a8e4ff"/>
<rect x="58.8" y="139.8" width="8.4" height="9.4" fill="#b8e0ff"/>
<rect x="68" y="139" width="9" height="11" fill="#ff41ff"/>
<rect x="68.8" y="139.8" width="7.4" height="9.4" fill="#ff60e0"/>
<rect x="77" y="139" width="10" height="11" fill="#90c000"/>
<rect x="87" y="139" width="9" height="11" fill="#bb8b8b"/>
<rect x="87.8" y="139.8" width="7.4" height="9.4" fill="#b09090"/>
<rect x="96" y="139" width="10" height="11" fill="#3387b7"/>
<rect x="96.8" y="139.8" width="8.4" height="9.4" fill="#4880a0"/>
<rect x="106" y="139" width="9" height="11" fill="#50f838"/>
<rect x="106.8" y="139.8" width="7.4" height="9.4" fill="#70e060"/>
<rect x="115" y="139" width="10" height="11" fill="#830bfb"/>
<rect x="115.8" y="139.8" width="8.4" height="9.4" fill="#7020c0"/>
<rect x="125" y="139" width="9" height="11" fill="#280080"/>
<rect x="134" y="139" width="10" height="11" fill="#18fc6c"/>
<rect x="134.8" y="139.8" width="8.4" height="9.4" fill="#48e080"/>
<rect x="144" y="139" width="9" height="11" fill="#505050"/>
<rect x="153" y="139" width="10" height="11" fill="#b80060"/>
<rect x="163" y="139" width="9" height="11" fill="#70ff00"/>
<rect x="172" y="139" width="10" height="11" fill="#000080"/>
<rect x="182" y="139" width="9" height="11" fill="#708800"/>
<rect x="182.8" y="139.8" width="7.4" height="9.4" fill="#708020"/>
<rect x="191" y="139" width="9" height="11" fill="#473b9b"/>
<rect x="191.8" y="139.8" width="7.4" height="9.4" fill="#484080"/>
<rect x="200" y="139" width="10" height="11" fill="#c7a300"/>
<rect x="200.8" y="139.8" width="8.4" height="9.4" fill="#b8a020"/>
<rect x="210" y="139" width="9" height="11" fill="#ffddad"/>
<rect x="210.8" y="139.8" width="7.4" height="9.4" fill="#ffe0c0"/>
<rect x="219" y="139" width="10" height="11" fill="#1ed2d2"/>
<rect x="219.8" y="139.8" width="8.4" height="9.4" fill="#48c0c0"/>
<rect x="229" y="139" width="9" height="11" fill="#657dff"/>
<rect x="229.8" y="139.8" width="7.4" height="9.4" fill="#7080e0"/>
<rect x="238" y="139" width="10" height="11" fill="#6e5656"/>
<rect x="238.8" y="139.8" width="8.4" height="9.4" fill="#685858"/>
<rect x="248" y="139" width="9" height="11" fill="#11f5ff"/>
<rect x="248.8" y="139.8" width="7.4" height="9.4" fill="#48e0ff"/>
<rect x="257" y="139" width="10" height="11" fill="#e22e2e"/>
<rect x="257.8" y="139.8" width="8.4" height="9.4" fill="#b84040"/>
<rect x="267" y="139" width="9" height="11" fill="#b40c6c"/>
<rect x="267.8" y="139.8" width="7.4" height="9.4" fill="#902060"/>
<rect x="276" y="139" width="10" height="11" fill="#c0c0c0"/>
<rect x="286" y="139" width="9" height="11" fill="#b7c393"/>
<rect x="286.8" y="139.8" width="7.4" height="9.4" fill="#b8c0a0"/>
<rect x="295" y="139" width="10" height="11" fill="#e9b9e9"/>
<rect x="295.8" y="139.8" width="8.4" height="9.4" fill="#e0c0e0"/>
<rect x="305" y="139" width="9" height="11" fill="#ffb888"/>
<rect x="305.8" y="139.8" width="7.4" height="9.4" fill="#ffc0a0"/>
<rect x="314" y="139" width="10" height="11" fill="#484000"/>
<rect x="324" y="139" width="9" height="11" fill="#fc9c0c"/>
<rect x="324.8" y="139.8" width="7.4" height="9.4" fill="#e0a040"/>
<rect x="333" y="139" width="10" height="11" fill="#b800ff"/>
<rect x="21" y="150" width="9" height="11" fill="#480060"/>
<rect x="30" y="150" width="9" height="11" fill="#395dff"/>
<rect x="30.8" y="150.8" width="7.4" height="9.4" fill="#4860e0"/>
<rect x="39" y="150" width="10" height="11" fill="#ff8000"/>
<rect x="49" y="150" width="9" height="11" fill="#20ff00"/>
<rect x="58" y="150" width="10" height="11" fill="#00e0e0"/>
<rect x="68" y="150" width="9" height="11" fill="#b8c000"/>
<rect x="77" y="150" width="10" height="11" fill="#2000c0"/>
<rect x="87" y="150" width="9" height="11" fill="#ff2080"/>
<rect x="87.8" y="150.8" width="7.4" height="9.4" fill="#ff4080"/>
<rect x="96" y="150" width="10" height="11" fill="#16fa9a"/>
<rect x="96.8" y="150.8" width="8.4" height="9.4" fill="#48e0a0"/>
<rect x="106" y="150" width="9" height="11" fill="#6e6e9e"/>
<rect x="106.8" y="150.8" width="7.4" height="9.4" fill="#707090"/>
<rect x="115" y="150" width="10" height="11" fill="#15f9c9"/>
<rect x="115.8" y="150.8" width="8.4" height="9.4" fill="#48e0c0"/>
<rect x="125" y="150" width="9" height="11" fill="#7bf333"/>
<rect x="125.8" y="150.8" width="7.4" height="9.4" fill="#90e060"/>
<rect x="134" y="150" width="10" height="11" fill="#008020"/>
<rect x="144" y="150" width="9" height="11" fill="#0080a0"/>
<rect x="153" y="150" width="10" height="11" fill="#ab7b7b"/>
<rect x="153.8" y="150.8" width="8.4" height="9.4" fill="#a08080"/>
<rect x="163" y="150" width="9" height="11" fill="#500000"/>
<rect x="172" y="150" width="10" height="11" fill="#e00080"/>
<rect x="182" y="150" width="9" height="11" fill="#271b7b"/>
<rect x="182.8" y="150.8" width="7.4" height="9.4" fill="#282060"/>
<rect x="191" y="150" width="9" height="11" fill="#abff00"/>
<rect x="191.8" y="150.8" width="7.4" height="9.4" fill="#b8ff20"/>
<rect x="200" y="150" width="10" height="11" fill="#5bd313"/>
<rect x="200.8" y="150.8" width="8.4" height="9.4" fill="#70c040"/>
<rect x="210" y="150" width="9" height="11" fill="#0e9202"/>
<rect x="210.8" y="150.8" width="7.4" height="9.4" fill="#288020"/>
<rect x="219" y="150" width="10" height="11" fill="#ff0060"/>
<rect x="219.8" y="150.8" width="8.4" height="9.4" fill="#e02060"/>
<rect x="229" y="150" width="9" height="11" fill="#e08000"/>
<rect x="238" y="150" width="10" height="11" fill="#9b8300"/>
<rect x="238.8" y="150.8" width="8.4" height="9.4" fill="#908020"/>
<rect x="248" y="150" width="9" height="11" fill="#368a5a"/>
<rect x="248.8" y="150.8" width="7.4" height="9.4" fill="#488060"/>
<rect x="257" y="150" width="10" height="11" fill="#da5600"/>
<rect x="257.8" y="150.8" width="8.4" height="9.4" fill="#b86020"/>
<rect x="267" y="150" width="9" height="11" fill="#ffc000"/>
<rect x="276" y="150" width="10" height="11" fill="#beca00"/>
<rect x="276.8" y="150.8" width="8.4" height="9.4" fill="#b8c020"/>
<rect x="286" y="150" width="9" height="11" fill="#88d000"/>
<rect x="286.8" y="150.8" width="7.4" height="9.4" fill="#90c020"/>
<rect x="295" y="150" width="10" height="11" fill="#008040"/>
<rect x="305" y="150" width="9" height="11" fill="#e00000"/>
<rect x="314" y="150" width="10" height="11" fill="#ff1cdc"/>
<rect x="314.8" y="150.8" width="8.4" height="9.4" fill="#ff40c0"/>
<rect x="324" y="150" width="9" height="11" fill="#ff00ff"/>
<rect x="324.8" y="150.8" width="7.4" height="9.4" fill="#ff20e0"/>
<rect x="333" y="150" width="10" height="11" fill="#8b5b5b"/>
<rect x="333.8" y="150.8" width="8.4" height="9.4" fill="#806060"/>
<rect x="21" y="161" width="9" height="11" fill="#90a000"/>
<rect x="30" y="161" width="9" height="11" fill="#ffa000"/>
<rect x="39" y="161" width="10" height="11" fill="#669672"/>
<rect x="39.8" y="161.8" width="8.4" height="9.4" fill="#709078"/>
<rect x="49" y="161" width="9" height="11" fill="#0161ff"/>
<rect x="49.8" y="161.8" width="7.4" height="9.4" fill="#2060ff"/>
<rect x="58" y="161" width="10" height="11" fill="#900000"/>
<rect x="68" y="161" width="9" height="11" fill="#00c000"/>
<rect x="77" y="161" width="10" height="11" fill="#ff90c0"/>
<rect x="77.8" y="161.8" width="8.4" height="9.4" fill="#ffa0c0"/>
<rect x="87" y="161" width="9" height="11" fill="#005800"/>
<rect x="96" y="161" width="10" height="11" fill="#22d676"/>
<rect x="96.8" y="161.8" width="8.4" height="9.4" fill="#48c080"/>
<rect x="106" y="161" width="9" height="11" fill="#ff5000"/>
<rect x="106.8" y="161.8" width="7.4" height="9.4" fill="#e06020"/>
<rect x="115" y="161" width="10" height="11" fill="#00ff16"/>
<rect x="115.8" y="161.8" width="8.4" height="9.4" fill="#20e040"/>
<rect x="125" y="161" width="9" height="11" fill="#2b1f1f"/>
<rect x="125.8" y="161.8" width="7.4" height="9.4" fill="#282020"/>
<rect x="134" y="161" width="10" height="11" fill="#0bffbf"/>
<rect x="134.8" y="161.8" width="8.4" height="9.4" fill="#48ffc0"/>
<rect x="144" y="161" width="9" height="11" fill="#fe6ece"/>
<rect x="144.8" y="161.8" width="7.4" height="9.4" fill="#e080c0"/>
<rect x="153" y="161" width="10" height="11" fill="#ff4676"/>
<rect x="153.8" y="161.8" width="8.4" height="9.4" fill="#ff6080"/>
<rect x="163" y="161" width="9" height="11" fill="#83cb6b"/>
<rect x="163.8" y="161.8" width="7.4" height="9.4" fill="#90c080"/>
<rect x="172" y="161" width="10" height="11" fill="#ff69c9"/>
<rect x="172.8" y="161.8" width="8.4" height="9.4" fill="#ff80c0"/>
<rect x="182" y="161" width="9" height="11" fill="#d723ff"/>
<rect x="182.8" y="161.8" width="7.4" height="9.4" fill="#b840ff"/>
<rect x="191" y="161" width="9" height="11" fill="#700020"/>
<rect x="200" y="161" width="10" height="11" fill="#27db00"/>
<rect x="200.8" y="161.8" width="8.4" height="9.4" fill="#48c020"/>
<rect x="210" y="161" width="9" height="11" fill="#927ada"/>
<rect x="210.8" y="161.8" width="7.4" height="9.4" fill="#9080c0"/>
<rect x="219" y="161" width="10" height="11" fill="#20202c"/>
<rect x="219.8" y="161.8" width="8.4" height="9.4" fill="#202028"/>
<rect x="229" y="161" width="9" height="11" fill="#8ea646"/>
<rect x="229.8" y="161.8" width="7.4" height="9.4" fill="#90a060"/>
<rect x="238" y="161" width="10" height="11" fill="#e06000"/>
<rect x="248" y="161" width="9" height="11" fill="#ff7010"/>
<rect x="248.8" y="161.8" width="7.4" height="9.4" fill="#ff8040"/>
<rect x="257" y="161" width="10" height="11" fill="#000020"/>
<rect x="267" y="161" width="9" height="11" fill="#70a000"/>
<rect x="276" y="161" width="10" height="11" fill="#bac636"/>
<rect x="276.8" y="161.8" width="8.4" height="9.4" fill="#b8c060"/>
<rect x="286" y="161" width="9" height="11" fill="#6eff86"/>
<rect x="286.8" y="161.8" width="7.4" height="9.4" fill="#90ffa0"/>
<rect x="295" y="161" width="10" height="11" fill="#c29e6e"/>
<rect x="295.8" y="161.8" width="8.4" height="9.4" fill="#b8a080"/>
<rect x="305" y="161" width="9" height="11" fill="#e400f0"/>
<rect x="305.8" y="161.8" width="7.4" height="9.4" fill="#b820c0"/>
<rect x="314" y="161" width="10" height="11" fill="#90a818"/>
<rect x="314.8" y="161.8" width="8.4" height="9.4" fill="#90a040"/>
<rect x="324" y="161" width="9" height="11" fill="#029232"/>
<rect x="324.8" y="161.8" width="7.4" height="9.4" fill="#208040"/>
<rect x="333" y="161" width="10" height="11" fill="#ffe151"/>
<rect x="333.8" y="161.8" width="8.4" height="9.4" fill="#ffe080"/>
<rect x="21" y="172" width="9" height="10" fill="#4800e0"/>
<rect x="30" y="172" width="9" height="10" fill="#0000a0"/>
<rect x="39" y="172" width="10" height="10" fill="#4b634b"/>
<rect x="39.8" y="172.8" width="8.4" height="8.4" fill="#506050"/>
<rect x="49" y="172" width="9" height="10" fill="#288000"/>
<rect x="58" y="172" width="10" height="10" fill="#d75353"/>
<rect x="58.8" y="172.8" width="8.4" height="8.4" fill="#b86060"/>
<rect x="68" y="172" width="9" height="10" fill="#406464"/>
<rect x="68.8" y="172.8" width="7.4" height="8.4" fill="#486060"/>
<rect x="77" y="172" width="10" height="10" fill="#cb9b9b"/>
<rect x="77.8" y="172.8" width="8.4" height="8.4" fill="#c0a0a0"/>
<rect x="87" y="172" width="9" height="10" fill="#d9ffa9"/>
<rect x="87.8" y="172.8" width="7.4" height="8.4" fill="#e0ffc0"/>
<rect x="96" y="172" width="10" height="10" fill="#947cac"/>
<rect x="96.8" y="172.8" width="8.4" height="8.4" fill="#9080a0"/>
<rect x="106" y="172" width="9" height="10" fill="#700090"/>
<rect x="115" y="172" width="10" height="10" fill="#bd99f9"/>
<rect x="115.8" y="172.8" width="8.4" height="8.4" fill="#b8a0e0"/>
<rect x="125" y="172" width="9" height="10" fill="#416535"/>
<rect x="125.8" y="172.8" width="7.4" height="8.4" fill="#486040"/>
<rect x="134" y="172" width="10" height="10" fill="#900060"/>
<rect x="144" y="172" width="9" height="10" fill="#900040"/>
<rect x="153" y="172" width="10" height="10" fill="#00ff43"/>
<rect x="153.8" y="172.8" width="8.4" height="8.4" fill="#28e060"/>
<rect x="163" y="172" width="9" height="10" fill="#00ffa0"/>
<rect x="172" y="172" width="10" height="10" fill="#493d6d"/>
<rect x="172.8" y="172.8" width="8.4" height="8.4" fill="#484060"/>
<rect x="182" y="172" width="9" height="10" fill="#ff45a5"/>
<rect x="182.8" y="172.8" width="7.4" height="8.4" fill="#ff60a0"/>
<rect x="191" y="172" width="9" height="10" fill="#174717"/>
<rect x="191.8" y="172.8" width="7.4" height="8.4" fill="#204020"/>
<rect x="200" y="172" width="10" height="10" fill="#ff2252"/>
<rect x="200.8" y="172.8" width="8.4" height="8.4" fill="#ff4060"/>
<rect x="210" y="172" width="9" height="10" fill="#bcc808"/>
<rect x="210.8" y="172.8" width="7.4" height="8.4" fill="#b8c040"/>
<rect x="219" y="172" width="10" height="10" fill="#3185e5"/>
<rect x="219.8" y="172.8" width="8.4" height="8.4" fill="#4880c0"/>
<rect x="229" y="172" width="9" height="10" fill="#e02c5c"/>
<rect x="229.8" y="172.8" width="7.4" height="8.4" fill="#b84060"/>
<rect x="238" y="172" width="10" height="10" fill="#00e0a0"/>
<rect x="248" y="172" width="9" height="10" fill="#881070"/>
<rect x="248.8" y="172.8" width="7.4" height="8.4" fill="#702060"/>
<rect x="257" y="172" width="10" height="10" fill="#6bffe3"/>
<rect x="257.8" y="172.8" width="8.4" height="8.4" fill="#90ffe0"/>
<rect x="267" y="172" width="9" height="10" fill="#006040"/>
<rect x="276" y="172" width="10" height="10" fill="#486000"/>
<rect x="286" y="172" width="9" height="10" fill="#902000"/>
<rect x="295" y="172" width="10" height="10" fill="#00d7d7"/>
<rect x="295.8" y="172.8" width="8.4" height="8.4" fill="#28c0c0"/>
<rect x="305" y="172" width="9" height="10" fill="#0080e0"/>
<rect x="314" y="172" width="10" height="10" fill="#0666c6"/>
<rect x="314.8" y="172.8" width="8.4" height="8.4" fill="#2060a0"/>
<rect x="324" y="172" width="9" height="10" fill="#51c9ff"/>
<rect x="324.8" y="172.8" width="7.4" height="8.4" fill="#70c0ff"/>
<rect x="333" y="172" width="10" height="10" fill="#b8ff00"/>
<rect x="21" y="182" width="9" height="11" fill="#52cafa"/>
<rect x="21.8" y="182.8" width="7.4" height="9.4" fill="#70c0e0"/>
<rect x="30" y="182" width="9" height="11" fill="#708000"/>
<rect x="39" y="182" width="10" height="11" fill="#1515ff"/>
<rect x="39.8" y="182.8" width="8.4" height="9.4" fill="#2020e0"/>
<rect x="49" y="182" width="9" height="11" fill="#0000ff"/>
<rect x="58" y="182" width="10" height="11" fill="#ff00ff"/>
<rect x="68" y="182" width="9" height="11" fill="#87b787"/>
<rect x="68.8" y="182.8" width="7.4" height="9.4" fill="#90b090"/>
<rect x="77" y="182" width="10" height="11" fill="#5ca4ff"/>
<rect x="77.8" y="182.8" width="8.4" height="9.4" fill="#70a0e0"/>
<rect x="87" y="182" width="9" height="11" fill="#004060"/>
<rect x="96" y="182" width="10" height="11" fill="#ff0040"/>
<rect x="106" y="182" width="9" height="11" fill="#0060a0"/>
<rect x="115" y="182" width="10" height="11" fill="#707070"/>
<rect x="125" y="182" width="9" height="11" fill="#b8e000"/>
<rect x="134" y="182" width="10" height="11" fill="#43ff8b"/>
<rect x="134.8" y="182.8" width="8.4" height="9.4" fill="#70ffa0"/>
<rect x="144" y="182" width="9" height="11" fill="#7830ff"/>
<rect x="144.8" y="182.8" width="7.4" height="9.4" fill="#7040e0"/>
<rect x="153" y="182" width="10" height="11" fill="#e300ff"/>
<rect x="153.8" y="182.8" width="8.4" height="9.4" fill="#b820e0"/>
<rect x="163" y="182" width="9" height="11" fill="#1b1bab"/>
<rect x="163.8" y="182.8" width="7.4" height="9.4" fill="#202080"/>
<rect x="172" y="182" width="10" height="11" fill="#0087ff"/>
<rect x="172.8" y="182.8" width="8.4" height="9.4" fill="#2080ff"/>
<rect x="182" y="182" width="9" height="11" fill="#173bff"/>
<rect x="182.8" y="182.8" width="7.4" height="9.4" fill="#2840e0"/>
<rect x="191" y="182" width="9" height="11" fill="#ff2828"/>
<rect x="191.8" y="182.8" width="7.4" height="9.4" fill="#e04040"/>
<rect x="200" y="182" width="10" height="11" fill="#00ffff"/>
<rect x="200.8" y="182.8" width="8.4" height="9.4" fill="#28ffff"/>
<rect x="210" y="182" width="9" height="11" fill="#563e3e"/>
<rect x="210.8" y="182.8" width="7.4" height="9.4" fill="#504040"/>
<rect x="219" y="182" width="10" height="11" fill="#00c0c0"/>
<rect x="229" y="182" width="9" height="11" fill="#ad05ff"/>
<rect x="229.8" y="182.8" width="7.4" height="9.4" fill="#9020e0"/>
<rect x="238" y="182" width="10" height="11" fill="#ffff00"/>
<rect x="248" y="182" width="9" height="11" fill="#002020"/>
<rect x="257" y="182" width="10" height="11" fill="#00c060"/>
<rect x="267" y="182" width="9" height="11" fill="#ae06f6"/>
<rect x="267.8" y="182.8" width="7.4" height="9.4" fill="#9020c0"/>
<rect x="276" y="182" width="10" height="11" fill="#00ffc4"/>
<rect x="276.8" y="182.8" width="8.4" height="9.4" fill="#28ffc0"/>
<rect x="286" y="182" width="9" height="11" fill="#0d61ff"/>
<rect x="286.8" y="182.8" width="7.4" height="9.4" fill="#2860e0"/>
<rect x="295" y="182" width="10" height="11" fill="#282000"/>
<rect x="305" y="182" width="9" height="11" fill="#181010"/>
<rect x="314" y="182" width="10" height="11" fill="#d0d0d0"/>
<rect x="324" y="182" width="9" height="11" fill="#89a1d1"/>
<rect x="324.8" y="182.8" width="7.4" height="9.4" fill="#90a0c0"/>
<rect x="333" y="182" width="10" height="11" fill="#d04cff"/>
<rect x="333.8" y="182.8" width="8.4" height="9.4" fill="#b860e0"/>
<rect x="21" y="193" width="9" height="11" fill="#ff7515"/>
<rect x="21.8" y="193.8" width="7.4" height="9.4" fill="#e08040"/>
<rect x="30" y="193" width="9" height="11" fill="#ff005b"/>
<rect x="30.8" y="193.8" width="7.4" height="9.4" fill="#ff2060"/>
<rect x="39" y="193" width="10" height="11" fill="#00ffff"/>
<rect x="49" y="193" width="9" height="11" fill="#004080"/>
<rect x="58" y="193" width="10" height="11" fill="#00dc4c"/>
<rect x="58.8" y="193.8" width="8.4" height="9.4" fill="#28c060"/>
<rect x="68" y="193" width="9" height="11" fill="#00ff9f"/>
<rect x="68.8" y="193.8" width="7.4" height="9.4" fill="#28e0a0"/>
<rect x="77" y="193" width="10" height="11" fill="#725aba"/>
<rect x="77.8" y="193.8" width="8.4" height="9.4" fill="#7060a0"/>
<rect x="87" y="193" width="9" height="11" fill="#4a0eff"/>
<rect x="87.8" y="193.8" width="7.4" height="9.4" fill="#4820ff"/>
<rect x="96" y="193" width="10" height="11" fill="#a3ffaf"/>
<rect x="96.8" y="193.8" width="8.4" height="9.4" fill="#b8ffc0"/>
<rect x="106" y="193" width="9" height="11" fill="#5fa7a7"/>
<rect x="106.8" y="193.8" width="7.4" height="9.4" fill="#70a0a0"/>
<rect x="115" y="193" width="10" height="11" fill="#59d141"/>
<rect x="115.8" y="193.8" width="8.4" height="9.4" fill="#70c060"/>
<rect x="125" y="193" width="9" height="11" fill="#4800c0"/>
<rect x="134" y="193" width="10" height="11" fill="#1e2a1e"/>
<rect x="134.8" y="193.8" width="8.4" height="9.4" fill="#202820"/>
<rect x="144" y="193" width="9" height="11" fill="#b9c565"/>
<rect x="144.8" y="193.8" width="7.4" height="9.4" fill="#b8c080"/>
<rect x="153" y="193" width="10" height="11" fill="#20d4a4"/>
<rect x="153.8" y="193.8" width="8.4" height="9.4" fill="#48c0a0"/>
<rect x="163" y="193" width="9" height="11" fill="#500020"/>
<rect x="172" y="193" width="10" height="11" fill="#48ff00"/>
<rect x="182" y="193" width="9" height="11" fill="#ffbc2c"/>
<rect x="182.8" y="193.8" width="7.4" height="9.4" fill="#ffc060"/>
<rect x="191" y="193" width="9" height="11" fill="#ff4848"/>
<rect x="191.8" y="193.8" width="7.4" height="9.4" fill="#ff6060"/>
<rect x="200" y="193" width="10" height="11" fill="#00c0e0"/>
<rect x="210" y="193" width="9" height="11" fill="#ceceff"/>
<rect x="210.8" y="193.8" width="7.4" height="9.4" fill="#d0d0f8"/>
<rect x="219" y="193" width="10" height="11" fill="#9b6b6b"/>
<rect x="219.8" y="193.8" width="8.4" height="9.4" fill="#907070"/>
<rect x="229" y="193" width="9" height="11" fill="#d7ffd7"/>
<rect x="229.8" y="193.8" width="7.4" height="9.4" fill="#e0ffe0"/>
<rect x="238" y="193" width="10" height="11" fill="#0060ff"/>
<rect x="248" y="193" width="9" height="11" fill="#700040"/>
<rect x="257" y="193" width="10" height="11" fill="#0080c0"/>
<rect x="267" y="193" width="9" height="11" fill="#e0a000"/>
<rect x="276" y="193" width="10" height="11" fill="#462e2e"/>
<rect x="276.8" y="193.8" width="8.4" height="9.4" fill="#403030"/>
<rect x="286" y="193" width="9" height="11" fill="#ffff00"/>
<rect x="286.8" y="193.8" width="7.4" height="9.4" fill="#ffff40"/>
<rect x="295" y="193" width="10" height="11" fill="#ff44ff"/>
<rect x="295.8" y="193.8" width="8.4" height="9.4" fill="#e060ff"/>
<rect x="305" y="193" width="9" height="11" fill="#00ff00"/>
<rect x="314" y="193" width="10" height="11" fill="#b88000"/>
<rect x="324" y="193" width="9" height="11" fill="#480090"/>
<rect x="333" y="193" width="10" height="11" fill="#0a3aff"/>
<rect x="333.8" y="193.8" width="8.4" height="9.4" fill="#2040ff"/>
<rect x="21" y="204" width="9" height="10" fill="#0020ff"/>
<rect x="30" y="204" width="9" height="10" fill="#967e7e"/>
<rect x="30.8" y="204.8" width="7.4" height="8.4" fill="#908080"/>
<rect x="39" y="204" width="10" height="10" fill="#64ac1c"/>
<rect x="39.8" y="204.8" width="8.4" height="8.4" fill="#70a040"/>
<rect x="49" y="204" width="9" height="10" fill="#08ffff"/>
<rect x="49.8" y="204.8" width="7.4" height="8.4" fill="#48ffff"/>
<rect x="58" y="204" width="10" height="10" fill="#ffffff"/>
<rect x="68" y="204" width="9" height="10" fill="#ff0131"/>
<rect x="68.8" y="204.8" width="7.4" height="8.4" fill="#e02040"/>
<rect x="77" y="204" width="10" height="10" fill="#706000"/>
<rect x="87" y="204" width="9" height="10" fill="#833b0b"/>
<rect x="87.8" y="204.8" width="7.4" height="8.4" fill="#704020"/>
<rect x="96" y="204" width="10" height="10" fill="#ff4d4d"/>
<rect x="96.8" y="204.8" width="8.4" height="8.4" fill="#e06060"/>
<rect x="106" y="204" width="9" height="10" fill="#5aa2ff"/>
<rect x="106.8" y="204.8" width="7.4" height="8.4" fill="#70a0ff"/>
<rect x="115" y="204" width="10" height="10" fill="#ff00a0"/>
<rect x="125" y="204" width="9" height="10" fill="#cc7878"/>
<rect x="125.8" y="204.8" width="7.4" height="8.4" fill="#b88080"/>
<rect x="134" y="204" width="10" height="10" fill="#e0ff00"/>
<rect x="144" y="204" width="9" height="10" fill="#9078ff"/>
<rect x="144.8" y="204.8" width="7.4" height="8.4" fill="#9080e0"/>
<rect x="153" y="204" width="10" height="10" fill="#ff7200"/>
<rect x="153.8" y="204.8" width="8.4" height="8.4" fill="#ff8020"/>
<rect x="163" y="204" width="9" height="10" fill="#b5f100"/>
<rect x="163.8" y="204.8" width="7.4" height="8.4" fill="#b8e020"/>
<rect x="172" y="204" width="10" height="10" fill="#0089ff"/>
<rect x="172.8" y="204.8" width="8.4" height="8.4" fill="#2080e0"/>
<rect x="182" y="204" width="9" height="10" fill="#4aff00"/>
<rect x="182.8" y="204.8" width="7.4" height="8.4" fill="#70ff20"/>
<rect x="191" y="204" width="9" height="10" fill="#d55181"/>
<rect x="191.8" y="204.8" width="7.4" height="8.4" fill="#b86080"/>
<rect x="200" y="204" width="10" height="10" fill="#b008c8"/>
<rect x="200.8" y="204.8" width="8.4" height="8.4" fill="#9020a0"/>
<rect x="210" y="204" width="9" height="10" fill="#25d919"/>
<rect x="210.8" y="204.8" width="7.4" height="8.4" fill="#48c040"/>
<rect x="219" y="204" width="10" height="10" fill="#aeaeea"/>
<rect x="219.8" y="204.8" width="8.4" height="8.4" fill="#b0b0d8"/>
<rect x="229" y="204" width="9" height="10" fill="#00a060"/>
<rect x="238" y="204" width="10" height="10" fill="#b80080"/>
<rect x="248" y="204" width="9" height="10" fill="#8e8ebe"/>
<rect x="248.8" y="204.8" width="7.4" height="8.4" fill="#9090b0"/>
<rect x="257" y="204" width="10" height="10" fill="#e9e900"/>
<rect x="257.8" y="204.8" width="8.4" height="8.4" fill="#e0e040"/>
<rect x="267" y="204" width="9" height="10" fill="#eb0737"/>
<rect x="267.8" y="204.8" width="7.4" height="8.4" fill="#b82040"/>
<rect x="276" y="204" width="10" height="10" fill="#280020"/>
<rect x="286" y="204" width="9" height="10" fill="#1dff00"/>
<rect x="286.8" y="204.8" width="7.4" height="8.4" fill="#48e020"/>
<rect x="295" y="204" width="10" height="10" fill="#2d81ff"/>
<rect x="295.8" y="204.8" width="8.4" height="8.4" fill="#4880ff"/>
<rect x="305" y="204" width="9" height="10" fill="#ff0303"/>
<rect x="305.8" y="204.8" width="7.4" height="8.4" fill="#e02020"/>
<rect x="314" y="204" width="10" height="10" fill="#6dffb5"/>
<rect x="314.8" y="204.8" width="8.4" height="8.4" fill="#90ffc0"/>
<rect x="324" y="204" width="9" height="10" fill="#6c8454"/>
<rect x="324.8" y="204.8" width="7.4" height="8.4" fill="#708060"/>
<rect x="333" y="204" width="10" height="10" fill="#4cf494"/>
<rect x="333.8" y="204.8" width="8.4" height="8.4" fill="#70e0a0"/>
<rect x="21" y="214" width="9" height="11" fill="#4d11ff"/>
<rect x="21.8" y="214.8" width="7.4" height="9.4" fill="#4820c0"/>
<rect x="30" y="214" width="9" height="11" fill="#a52ded"/>
<rect x="30.8" y="214.8" width="7.4" height="9.4" fill="#9040c0"/>
<rect x="39" y="214" width="10" height="11" fill="#ffdf7f"/>
<rect x="39.8" y="214.8" width="8.4" height="9.4" fill="#ffe0a0"/>
<rect x="49" y="214" width="9" height="11" fill="#ffb3ff"/>
<rect x="49.8" y="214.8" width="7.4" height="9.4" fill="#ffc0ff"/>
<rect x="58" y="214" width="10" height="11" fill="#00a020"/>
<rect x="68" y="214" width="9" height="11" fill="#ff7700"/>
<rect x="68.8" y="214.8" width="7.4" height="9.4" fill="#e08020"/>
<rect x="77" y="214" width="10" height="11" fill="#9850ff"/>
<rect x="77.8" y="214.8" width="8.4" height="9.4" fill="#9060ff"/>
<rect x="87" y="214" width="9" height="11" fill="#859dff"/>
<rect x="87.8" y="214.8" width="7.4" height="9.4" fill="#90a0ff"/>
<rect x="96" y="214" width="10" height="11" fill="#404040"/>
<rect x="106" y="214" width="9" height="11" fill="#a45c00"/>
<rect x="106.8" y="214.8" width="7.4" height="9.4" fill="#906020"/>
<rect x="115" y="214" width="10" height="11" fill="#aae6e6"/>
<rect x="115.8" y="214.8" width="8.4" height="9.4" fill="#b8e0e0"/>
<rect x="125" y="214" width="9" height="11" fill="#eeb2be"/>
<rect x="125.8" y="214.8" width="7.4" height="9.4" fill="#e0b8c0"/>
<rect x="134" y="214" width="10" height="11" fill="#00faff"/>
<rect x="134.8" y="214.8" width="8.4" height="9.4" fill="#28e0ff"/>
<rect x="144" y="214" width="9" height="11" fill="#dd29b9"/>
<rect x="144.8" y="214.8" width="7.4" height="9.4" fill="#b840a0"/>
<rect x="153" y="214" width="10" height="11" fill="#204000"/>
<rect x="163" y="214" width="9" height="11" fill="#00b0e0"/>
<rect x="163.8" y="214.8" width="7.4" height="9.4" fill="#28a0c0"/>
<rect x="172" y="214" width="10" height="11" fill="#e1ff00"/>
<rect x="172.8" y="214.8" width="8.4" height="9.4" fill="#e0ff20"/>
<rect x="182" y="214" width="9" height="11" fill="#ff2500"/>
<rect x="182.8" y="214.8" width="7.4" height="9.4" fill="#ff4020"/>
<rect x="191" y="214" width="9" height="11" fill="#4800a0"/>
<rect x="200" y="214" width="10" height="11" fill="#7f3767"/>
<rect x="200.8" y="214.8" width="8.4" height="9.4" fill="#704060"/>
<rect x="210" y="214" width="9" height="11" fill="#ff00ff"/>
<rect x="210.8" y="214.8" width="7.4" height="9.4" fill="#ff20ff"/>
<rect x="219" y="214" width="10" height="11" fill="#e4e484"/>
<rect x="219.8" y="214.8" width="8.4" height="9.4" fill="#e0e0a0"/>
<rect x="229" y="214" width="9" height="11" fill="#000040"/>
<rect x="238" y="214" width="10" height="11" fill="#00a000"/>
<rect x="248" y="214" width="9" height="11" fill="#2f83ff"/>
<rect x="248.8" y="214.8" width="7.4" height="9.4" fill="#4880e0"/>
<rect x="257" y="214" width="10" height="11" fill="#ab03ff"/>
<rect x="257.8" y="214.8" width="8.4" height="9.4" fill="#9020ff"/>
<rect x="267" y="214" width="9" height="11" fill="#00fff2"/>
<rect x="267.8" y="214.8" width="7.4" height="9.4" fill="#28ffe0"/>
<rect x="276" y="214" width="10" height="11" fill="#24a8ff"/>
<rect x="276.8" y="214.8" width="8.4" height="9.4" fill="#48a0ff"/>
<rect x="286" y="214" width="9" height="11" fill="#70c000"/>
<rect x="295" y="214" width="10" height="11" fill="#700000"/>
<rect x="305" y="214" width="9" height="11" fill="#ffb7b7"/>
<rect x="305.8" y="214.8" width="7.4" height="9.4" fill="#ffc0c0"/>
<rect x="314" y="214" width="10" height="11" fill="#05b900"/>
<rect x="314.8" y="214.8" width="8.4" height="9.4" fill="#28a020"/>
<rect x="324" y="214" width="9" height="11" fill="#ff4f1f"/>
<rect x="324.8" y="214.8" width="7.4" height="9.4" fill="#e06040"/>
<rect x="333" y="214" width="10" height="11" fill="#29adad"/>
<rect x="333.8" y="214.8" width="8.4" height="9.4" fill="#48a0a0"/>
<rect x="21" y="225" width="9" height="11" fill="#ea0666"/>
<rect x="21.8" y="225.8" width="7.4" height="9.4" fill="#b82060"/>
<rect x="30" y="225" width="9" height="11" fill="#ff00ea"/>
<rect x="30.8" y="225.8" width="7.4" height="9.4" fill="#e020c0"/>
<rect x="39" y="225" width="10" height="11" fill="#00ff39"/>
<rect x="39.8" y="225.8" width="8.4" height="9.4" fill="#28ff60"/>
<rect x="49" y="225" width="9" height="11" fill="#7d3595"/>
<rect x="49.8" y="225.8" width="7.4" height="9.4" fill="#704080"/>
<rect x="58" y="225" width="10" height="11" fill="#edbd8d"/>
<rect x="58.8" y="225.8" width="8.4" height="9.4" fill="#e0c0a0"/>
<rect x="68" y="225" width="9" height="11" fill="#618561"/>
<rect x="68.8" y="225.8" width="7.4" height="9.4" fill="#688068"/>
<rect x="77" y="225" width="10" height="11" fill="#23d747"/>
<rect x="77.8" y="225.8" width="8.4" height="9.4" fill="#48c060"/>
<rect x="87" y="225" width="9" height="11" fill="#ebbbbb"/>
<rect x="87.8" y="225.8" width="7.4" height="9.4" fill="#e0c0c0"/>
<rect x="96" y="225" width="10" height="11" fill="#ace8b8"/>
<rect x="96.8" y="225.8" width="8.4" height="9.4" fill="#b8e0c0"/>
<rect x="106" y="225" width="9" height="11" fill="#00fcfc"/>
<rect x="106.8" y="225.8" width="7.4" height="9.4" fill="#28e0e0"/>
<rect x="115" y="225" width="10" height="11" fill="#c874d4"/>
<rect x="115.8" y="225.8" width="8.4" height="9.4" fill="#b880c0"/>
<rect x="125" y="225" width="9" height="11" fill="#00d9a9"/>
<rect x="125.8" y="225.8" width="7.4" height="9.4" fill="#28c0a0"/>
<rect x="134" y="225" width="10" height="11" fill="#762eff"/>
<rect x="134.8" y="225.8" width="8.4" height="9.4" fill="#7040ff"/>
<rect x="144" y="225" width="9" height="11" fill="#ac3434"/>
<rect x="144.8" y="225.8" width="7.4" height="9.4" fill="#904040"/>
<rect x="153" y="225" width="10" height="11" fill="#146868"/>
<rect x="153.8" y="225.8" width="8.4" height="9.4" fill="#286060"/>
<rect x="163" y="225" width="9" height="11" fill="#00b484"/>
<rect x="163.8" y="225.8" width="7.4" height="9.4" fill="#28a080"/>
<rect x="172" y="225" width="10" height="11" fill="#637bff"/>
<rect x="172.8" y="225.8" width="8.4" height="9.4" fill="#7080ff"/>
<rect x="182" y="225" width="9" height="11" fill="#61a979"/>
<rect x="182.8" y="225.8" width="7.4" height="9.4" fill="#70a080"/>
<rect x="191" y="225" width="9" height="11" fill="#00e080"/>
<rect x="200" y="225" width="10" height="11" fill="#897dad"/>
<rect x="200.8" y="225.8" width="8.4" height="9.4" fill="#8880a0"/>
<rect x="210" y="225" width="9" height="11" fill="#90e000"/>
<rect x="219" y="225" width="10" height="11" fill="#84cc3c"/>
<rect x="219.8" y="225.8" width="8.4" height="9.4" fill="#90c060"/>
<rect x="229" y="225" width="9" height="11" fill="#00ff0c"/>
<rect x="229.8" y="225.8" width="7.4" height="9.4" fill="#20ff40"/>
<rect x="238" y="225" width="10" height="11" fill="#0080ff"/>
<rect x="248" y="225" width="9" height="11" fill="#00de1e"/>
<rect x="248.8" y="225.8" width="7.4" height="9.4" fill="#28c040"/>
<rect x="257" y="225" width="10" height="11" fill="#47476b"/>
<rect x="257.8" y="225.8" width="8.4" height="9.4" fill="#484860"/>
<rect x="267" y="225" width="9" height="11" fill="#4ef666"/>
<rect x="267.8" y="225.8" width="7.4" height="9.4" fill="#70e080"/>
<rect x="276" y="225" width="10" height="11" fill="#5e4646"/>
<rect x="276.8" y="225.8" width="8.4" height="9.4" fill="#584848"/>
<rect x="286" y="225" width="9" height="11" fill="#ff68f8"/>
<rect x="286.8" y="225.8" width="7.4" height="9.4" fill="#ff80e0"/>
<rect x="295" y="225" width="10" height="11" fill="#0fff63"/>
<rect x="295.8" y="225.8" width="8.4" height="9.4" fill="#48ff80"/>
<rect x="305" y="225" width="9" height="11" fill="#aa3262"/>
<rect x="305.8" y="225.8" width="7.4" height="9.4" fill="#904060"/>
<rect x="314" y="225" width="10" height="11" fill="#00ff00"/>
<rect x="314.8" y="225.8" width="8.4" height="9.4" fill="#20e020"/>
<rect x="324" y="225" width="9" height="11" fill="#775f2f"/>
<rect x="324.8" y="225.8" width="7.4" height="9.4" fill="#706040"/>
<rect x="333" y="225" width="10" height="11" fill="#101018"/>
<rect x="21" y="236" width="9" height="11" fill="#ff1eae"/>
<rect x="21.8" y="236.8" width="7.4" height="9.4" fill="#ff40a0"/>
<rect x="30" y="236" width="9" height="11" fill="#606060"/>
<rect x="39" y="236" width="10" height="11" fill="#8109ff"/>
<rect x="39.8" y="236.8" width="8.4" height="9.4" fill="#7020e0"/>
<rect x="49" y="236" width="9" height="11" fill="#d925ff"/>
<rect x="49.8" y="236.8" width="7.4" height="9.4" fill="#b840e0"/>
<rect x="58" y="236" width="10" height="11" fill="#ffe400"/>
<rect x="58.8" y="236.8" width="8.4" height="9.4" fill="#ffe040"/>
<rect x="68" y="236" width="9" height="11" fill="#54cccc"/>
<rect x="68.8" y="236.8" width="7.4" height="9.4" fill="#70c0c0"/>
<rect x="77" y="236" width="10" height="11" fill="#00ffc0"/>
<rect x="87" y="236" width="9" height="11" fill="#0020c0"/>
<rect x="96" y="236" width="10" height="11" fill="#11ff35"/>
<rect x="96.8" y="236.8" width="8.4" height="9.4" fill="#48ff60"/>
<rect x="106" y="236" width="9" height="11" fill="#193dfd"/>
<rect x="106.8" y="236.8" width="7.4" height="9.4" fill="#2840c0"/>
<rect x="115" y="236" width="10" height="11" fill="#ff00ff"/>
<rect x="115.8" y="236.8" width="8.4" height="9.4" fill="#e020e0"/>
<rect x="125" y="236" width="9" height="11" fill="#9c54e4"/>
<rect x="125.8" y="236.8" width="7.4" height="9.4" fill="#9060c0"/>
<rect x="134" y="236" width="10" height="11" fill="#1141a1"/>
<rect x="134.8" y="236.8" width="8.4" height="9.4" fill="#204080"/>
<rect x="144" y="236" width="9" height="11" fill="#008060"/>
<rect x="153" y="236" width="10" height="11" fill="#200040"/>
<rect x="163" y="236" width="9" height="11" fill="#00e020"/>
<rect x="172" y="236" width="10" height="11" fill="#1cd0ff"/>
<rect x="172.8" y="236.8" width="8.4" height="9.4" fill="#48c0e0"/>
<rect x="182" y="236" width="9" height="11" fill="#0b8f5f"/>
<rect x="182.8" y="236.8" width="7.4" height="9.4" fill="#288060"/>
<rect x="191" y="236" width="9" height="11" fill="#7ff700"/>
<rect x="191.8" y="236.8" width="7.4" height="9.4" fill="#90e020"/>
<rect x="200" y="236" width="10" height="11" fill="#7c34c4"/>
<rect x="200.8" y="236.8" width="8.4" height="9.4" fill="#7040a0"/>
<rect x="210" y="236" width="9" height="11" fill="#482000"/>
<rect x="219" y="236" width="10" height="11" fill="#ff0080"/>
<rect x="229" y="236" width="9" height="11" fill="#8a1242"/>
<rect x="229.8" y="236.8" width="7.4" height="9.4" fill="#702040"/>
<rect x="238" y="236" width="10" height="11" fill="#3c60c0"/>
<rect x="238.8" y="236.8" width="8.4" height="9.4" fill="#4860a0"/>
<rect x="248" y="236" width="9" height="11" fill="#48c000"/>
<rect x="257" y="236" width="10" height="11" fill="#c00000"/>
<rect x="267" y="236" width="9" height="11" fill="#ff0060"/>
<rect x="276" y="236" width="10" height="11" fill="#ff4a1a"/>
<rect x="276.8" y="236.8" width="8.4" height="9.4" fill="#ff6040"/>
<rect x="286" y="236" width="9" height="11" fill="#134373"/>
<rect x="286.8" y="236.8" width="7.4" height="9.4" fill="#204060"/>
<rect x="295" y="236" width="10" height="11" fill="#ff1bff"/>
<rect x="295.8" y="236.8" width="8.4" height="9.4" fill="#ff40e0"/>
<rect x="305" y="236" width="9" height="11" fill="#b82000"/>
<rect x="314" y="236" width="10" height="11" fill="#00aeff"/>
<rect x="314.8" y="236.8" width="8.4" height="9.4" fill="#20a0ff"/>
<rect x="324" y="236" width="9" height="11" fill="#bf9bcb"/>
<rect x="324.8" y="236.8" width="7.4" height="9.4" fill="#b8a0c0"/>
<rect x="333" y="236" width="10" height="11" fill="#796101"/>
<rect x="333.8" y="236.8" width="8.4" height="9.4" fill="#706020"/>
<rect x="21" y="247" width="9" height="10" fill="#14ff00"/>
<rect x="21.8" y="247.8" width="7.4" height="8.4" fill="#48ff20"/>
<rect x="30" y="247" width="9" height="10" fill="#f2c202"/>
<rect x="30.8" y="247.8" width="7.4" height="8.4" fill="#e0c040"/>
<rect x="39" y="247" width="10" height="10" fill="#66ae00"/>
<rect x="39.8" y="247.8" width="8.4" height="8.4" fill="#70a020"/>
<rect x="49" y="247" width="9" height="10" fill="#00ff60"/>
<rect x="58" y="247" width="10" height="10" fill="#e8b8ff"/>
<rect x="58.8" y="247.8" width="8.4" height="8.4" fill="#e0c0ff"/>
<rect x="68" y="247" width="9" height="10" fill="#e5e555"/>
<rect x="68.8" y="247.8" width="7.4" height="8.4" fill="#e0e080"/>
<rect x="77" y="247" width="10" height="10" fill="#ace8b8"/>
<rect x="77.8" y="247.8" width="8.4" height="8.4" fill="#b8e0c0"/>
<rect x="87" y="247" width="9" height="10" fill="#2000ff"/>
<rect x="96" y="247" width="10" height="10" fill="#ce4aff"/>
<rect x="96.8" y="247.8" width="8.4" height="8.4" fill="#b860ff"/>
<rect x="106" y="247" width="9" height="10" fill="#906000"/>
<rect x="115" y="247" width="10" height="10" fill="#7000a0"/>
<rect x="125" y="247" width="9" height="10" fill="#27abdb"/>
<rect x="125.8" y="247.8" width="7.4" height="8.4" fill="#48a0c0"/>
<rect x="134" y="247" width="10" height="10" fill="#58d070"/>
<rect x="134.8" y="247.8" width="8.4" height="8.4" fill="#70c080"/>
<rect x="144" y="247" width="9" height="10" fill="#f69696"/>
<rect x="144.8" y="247.8" width="7.4" height="8.4" fill="#e0a0a0"/>
<rect x="153" y="247" width="10" height="10" fill="#ff23b3"/>
<rect x="153.8" y="247.8" width="8.4" height="8.4" fill="#e040a0"/>
<rect x="163" y="247" width="9" height="10" fill="#00ff00"/>
<rect x="163.8" y="247.8" width="7.4" height="8.4" fill="#28ff20"/>
<rect x="172" y="247" width="10" height="10" fill="#72eaff"/>
<rect x="172.8" y="247.8" width="8.4" height="8.4" fill="#90e0ff"/>
<rect x="182" y="247" width="9" height="10" fill="#ff00b8"/>
<rect x="182.8" y="247.8" width="7.4" height="8.4" fill="#ff20a0"/>
<rect x="191" y="247" width="9" height="10" fill="#00ff68"/>
<rect x="191.8" y="247.8" width="7.4" height="8.4" fill="#28ff80"/>
<rect x="200" y="247" width="10" height="10" fill="#e0e000"/>
<rect x="210" y="247" width="9" height="10" fill="#00a0ff"/>
<rect x="219" y="247" width="10" height="10" fill="#deff1e"/>
<rect x="219.8" y="247.8" width="8.4" height="8.4" fill="#e0ff60"/>
<rect x="229" y="247" width="9" height="10" fill="#348888"/>
<rect x="229.8" y="247.8" width="7.4" height="8.4" fill="#488080"/>
<rect x="238" y="247" width="10" height="10" fill="#ff4b7b"/>
<rect x="238.8" y="247.8" width="8.4" height="8.4" fill="#e06080"/>
<rect x="248" y="247" width="9" height="10" fill="#541848"/>
<rect x="248.8" y="247.8" width="7.4" height="8.4" fill="#482040"/>
<rect x="257" y="247" width="10" height="10" fill="#900020"/>
<rect x="267" y="247" width="9" height="10" fill="#b3bfef"/>
<rect x="267.8" y="247.8" width="7.4" height="8.4" fill="#b8c0e0"/>
<rect x="276" y="247" width="10" height="10" fill="#e000c0"/>
<rect x="286" y="247" width="9" height="10" fill="#ff002d"/>
<rect x="286.8" y="247.8" width="7.4" height="8.4" fill="#ff2040"/>
<rect x="295" y="247" width="10" height="10" fill="#879fff"/>
<rect x="295.8" y="247.8" width="8.4" height="8.4" fill="#90a0e0"/>
<rect x="305" y="247" width="9" height="10" fill="#aaff00"/>
<rect x="305.8" y="247.8" width="7.4" height="8.4" fill="#b8ff40"/>
<rect x="314" y="247" width="10" height="10" fill="#4e3636"/>
<rect x="314.8" y="247.8" width="8.4" height="8.4" fill="#483838"/>
<rect x="324" y="247" width="9" height="10" fill="#daff7a"/>
<rect x="324.8" y="247.8" width="7.4" height="8.4" fill="#e0ffa0"/>
<rect x="333" y="247" width="10" height="10" fill="#ff9464"/>
<rect x="333.8" y="247.8" width="8.4" height="8.4" fill="#ffa080"/>
</g>
<rect x="19.0" y="32.0" width="2" height="225.0" fill="#000"/>
<rect x="343.0" y="32.0" width="2" height="225.0" fill="#000"/>
<path d="M2 32.5H16M346 32.5H360M2 43.5H16M346 43.5H360M2 54.5H16M346 54.5H360M2 64.5H16M346 64.5H360M2 75.5H16M346 75.5H360M2 86.5H16M346 86.5H360M2 97.5H16M346 97.5H360M2 107.5H16M346 107.5H360M2 118.5H16M346 118.5H360M2 129.5H16M346 129.5H360M2 139.5H16M346 139.5H360M2 150.5H16M346 150.5H360M2 161.5H16M346 161.5H360M2 172.5H16M346 172.5H360M2 182.5H16M346 182.5H360M2 193.5H16M346 193.5H360M2 204.5H16M346 204.5H360M2 214.5H16M346 214.5H360M2 225.5H16M346 225.5H360M2 236.5H16M346 236.5H360M2 247.5H16M346 247.5H360M2 257.5H16M346 257.5H360" stroke="#000" stroke-width="1" stroke-dasharray="2 2" fill="none"/>
<g fill="#000"><rect x="2" y="133" width="1.2" height="1.2"/><rect x="2" y="144" width="1.2" height="1.2"/><rect x="2" y="154" width="1.2" height="1.2"/><rect x="2" y="165" width="1.2" height="1.2"/><rect x="2" y="176" width="1.2" height="1.2"/><rect x="2" y="187" width="1.2" height="1.2"/><rect x="2" y="197" width="1.2" height="1.2"/><rect x="2" y="208" width="1.2" height="1.2"/><rect x="2" y="219" width="1.2" height="1.2"/><rect x="2" y="229" width="1.2" height="1.2"/><rect x="2" y="240" width="1.2" height="1.2"/><rect x="2" y="251" width="1.2" height="1.2"/><rect x="32.0" y="262" width="1" height="1"/><rect x="42.0" y="262" width="1" height="1"/><rect x="51.0" y="262" width="1" height="1"/><rect x="80.0" y="262" width="1" height="1"/><rect x="221.0" y="262" width="1" height="1"/><rect x="231.0" y="262" width="1" height="1"/><rect x="250.0" y="262" width="1" height="1"/><rect x="279.0" y="262" width="1" height="1"/><rect x="289.0" y="262" width="1" height="1"/><rect x="298.0" y="262" width="1" height="1"/><rect x="308.0" y="262" width="1" height="1"/><rect x="317.0" y="262" width="1" height="1"/><rect x="326.0" y="262" width="1" height="1"/><rect x="336.0" y="262" width="1" height="1"/></g>
<text x="181" y="16.8" text-anchor="middle" font-family="Liberation Sans, sans-serif" font-weight="bold" font-size="4.6" fill="#000" stroke="#000" stroke-width="0.25" textLength="44">Testchart 714 Felder</text>
<text x="181.5" y="22.3" text-anchor="middle" font-family="Liberation Sans, sans-serif" font-weight="bold" font-size="3" fill="#000" stroke="#000" stroke-width="0.08" textLength="97">Messfeldanordnung: 34 x 21 Felder, Größe: 7,1 x 8,0 mm</text>
<text x="340" y="269.6" text-anchor="end" font-family="Liberation Sans, sans-serif" font-weight="bold" font-size="3.2" fill="#000" stroke="#000" stroke-width="0.3" textLength="121">Erstellt mit Testchart-Generator, A4 210 x 297 mm, Seite 1 von 1, i1Pro 2</text>
</svg>
 </div>
 <div class="abs btn" style="left:95px;width:100px"></div>
 <div class="abs btn" style="left:205px;width:104px"></div>
</div>
<div id="tx">
<div class="abs t" id="title" style="left:17.61px;top:15.00px;font-size:21.30px;letter-spacing:-0.452px;">Testchart</div>
<div class="abs b" id="h2" style="left:29.76px;top:81.00px;font-size:14.70px;letter-spacing:-0.105px;">Testchart 714 Felder</div>
<div class="abs b" id="ger" style="left:20.12px;top:135.00px;font-size:11.50px;letter-spacing:0.189px;">Geräteeinrichtung</div>
<div class="abs b" id="sei" style="left:20.14px;top:187.00px;font-size:11.50px;letter-spacing:0.140px;">Seite einrichten</div>
<div class="abs t" id="sel1" style="left:195.99px;top:134.00px;font-size:11.50px;letter-spacing:-0.056px;">i1Pro 2</div>
<div class="abs t" id="sel2" style="left:195.84px;top:186.00px;font-size:11.50px;letter-spacing:0.071px;">A4,210 x 297 mm</div>
<div class="abs b" id="mess" style="left:22.19px;top:242.00px;font-size:11.50px;letter-spacing:0.140px;">Messfeldanordnung</div>
<div class="abs t" id="std" style="left:209.12px;top:242.00px;font-size:11.50px;letter-spacing:0.274px;">Standardwert verwenden</div>
<div class="abs t" id="mb" style="left:105.69px;top:280.00px;font-size:11.50px;letter-spacing:0.280px;">Messfeldbreite:</div>
<div class="abs t" id="mh" style="left:109.31px;top:306.00px;font-size:11.50px;letter-spacing:0.291px;">Messfeldhöhe:</div>
<div class="abs t" id="n1" style="left:389.30px;top:280.00px;font-size:11.50px;letter-spacing:-0.400px;">7,1</div>
<div class="abs t" id="n2" style="left:388.41px;top:305.00px;font-size:11.50px;letter-spacing:0.900px;">8,0</div>
<div class="abs t" id="mm1" style="left:436.83px;top:280.00px;font-size:11.50px;letter-spacing:0.000px;">mm</div>
<div class="abs t" id="mm2" style="left:436.83px;top:306.00px;font-size:11.50px;letter-spacing:0.000px;">mm</div>
<div class="abs t" id="ein" style="left:24.55px;top:378.00px;font-size:11.50px;letter-spacing:0.055px;">Einheiten</div>
<div class="abs t" id="selmm" style="left:196.07px;top:377.00px;font-size:11.50px;letter-spacing:0.000px;">mm</div>
<div class="abs b" id="dro" style="left:21.99px;top:427.00px;font-size:11.50px;letter-spacing:0.132px;">Druckoptionen</div>
<div class="abs t" id="dra" style="left:24.54px;top:458.00px;font-size:11.50px;letter-spacing:0.297px;">Druckausrichtung</div>
<div class="abs t" id="gesp" style="left:209.59px;top:457.00px;font-size:11.50px;letter-spacing:0.192px;">Gespiegelt drucken</div>
<div class="abs t" id="seite" style="left:623.23px;top:113.00px;font-size:11.50px;letter-spacing:-0.032px;">Seite 1 von 1</div>
<div class="abs t" id="dr" style="left:604.66px;top:436.00px;font-size:11.50px;letter-spacing:0.262px;">Drucken...</div>
<div class="abs t" id="sp" style="left:696.53px;top:436.00px;font-size:11.50px;letter-spacing:0.286px;">Speichern unter...</div>
</div>
</body>
</html>
